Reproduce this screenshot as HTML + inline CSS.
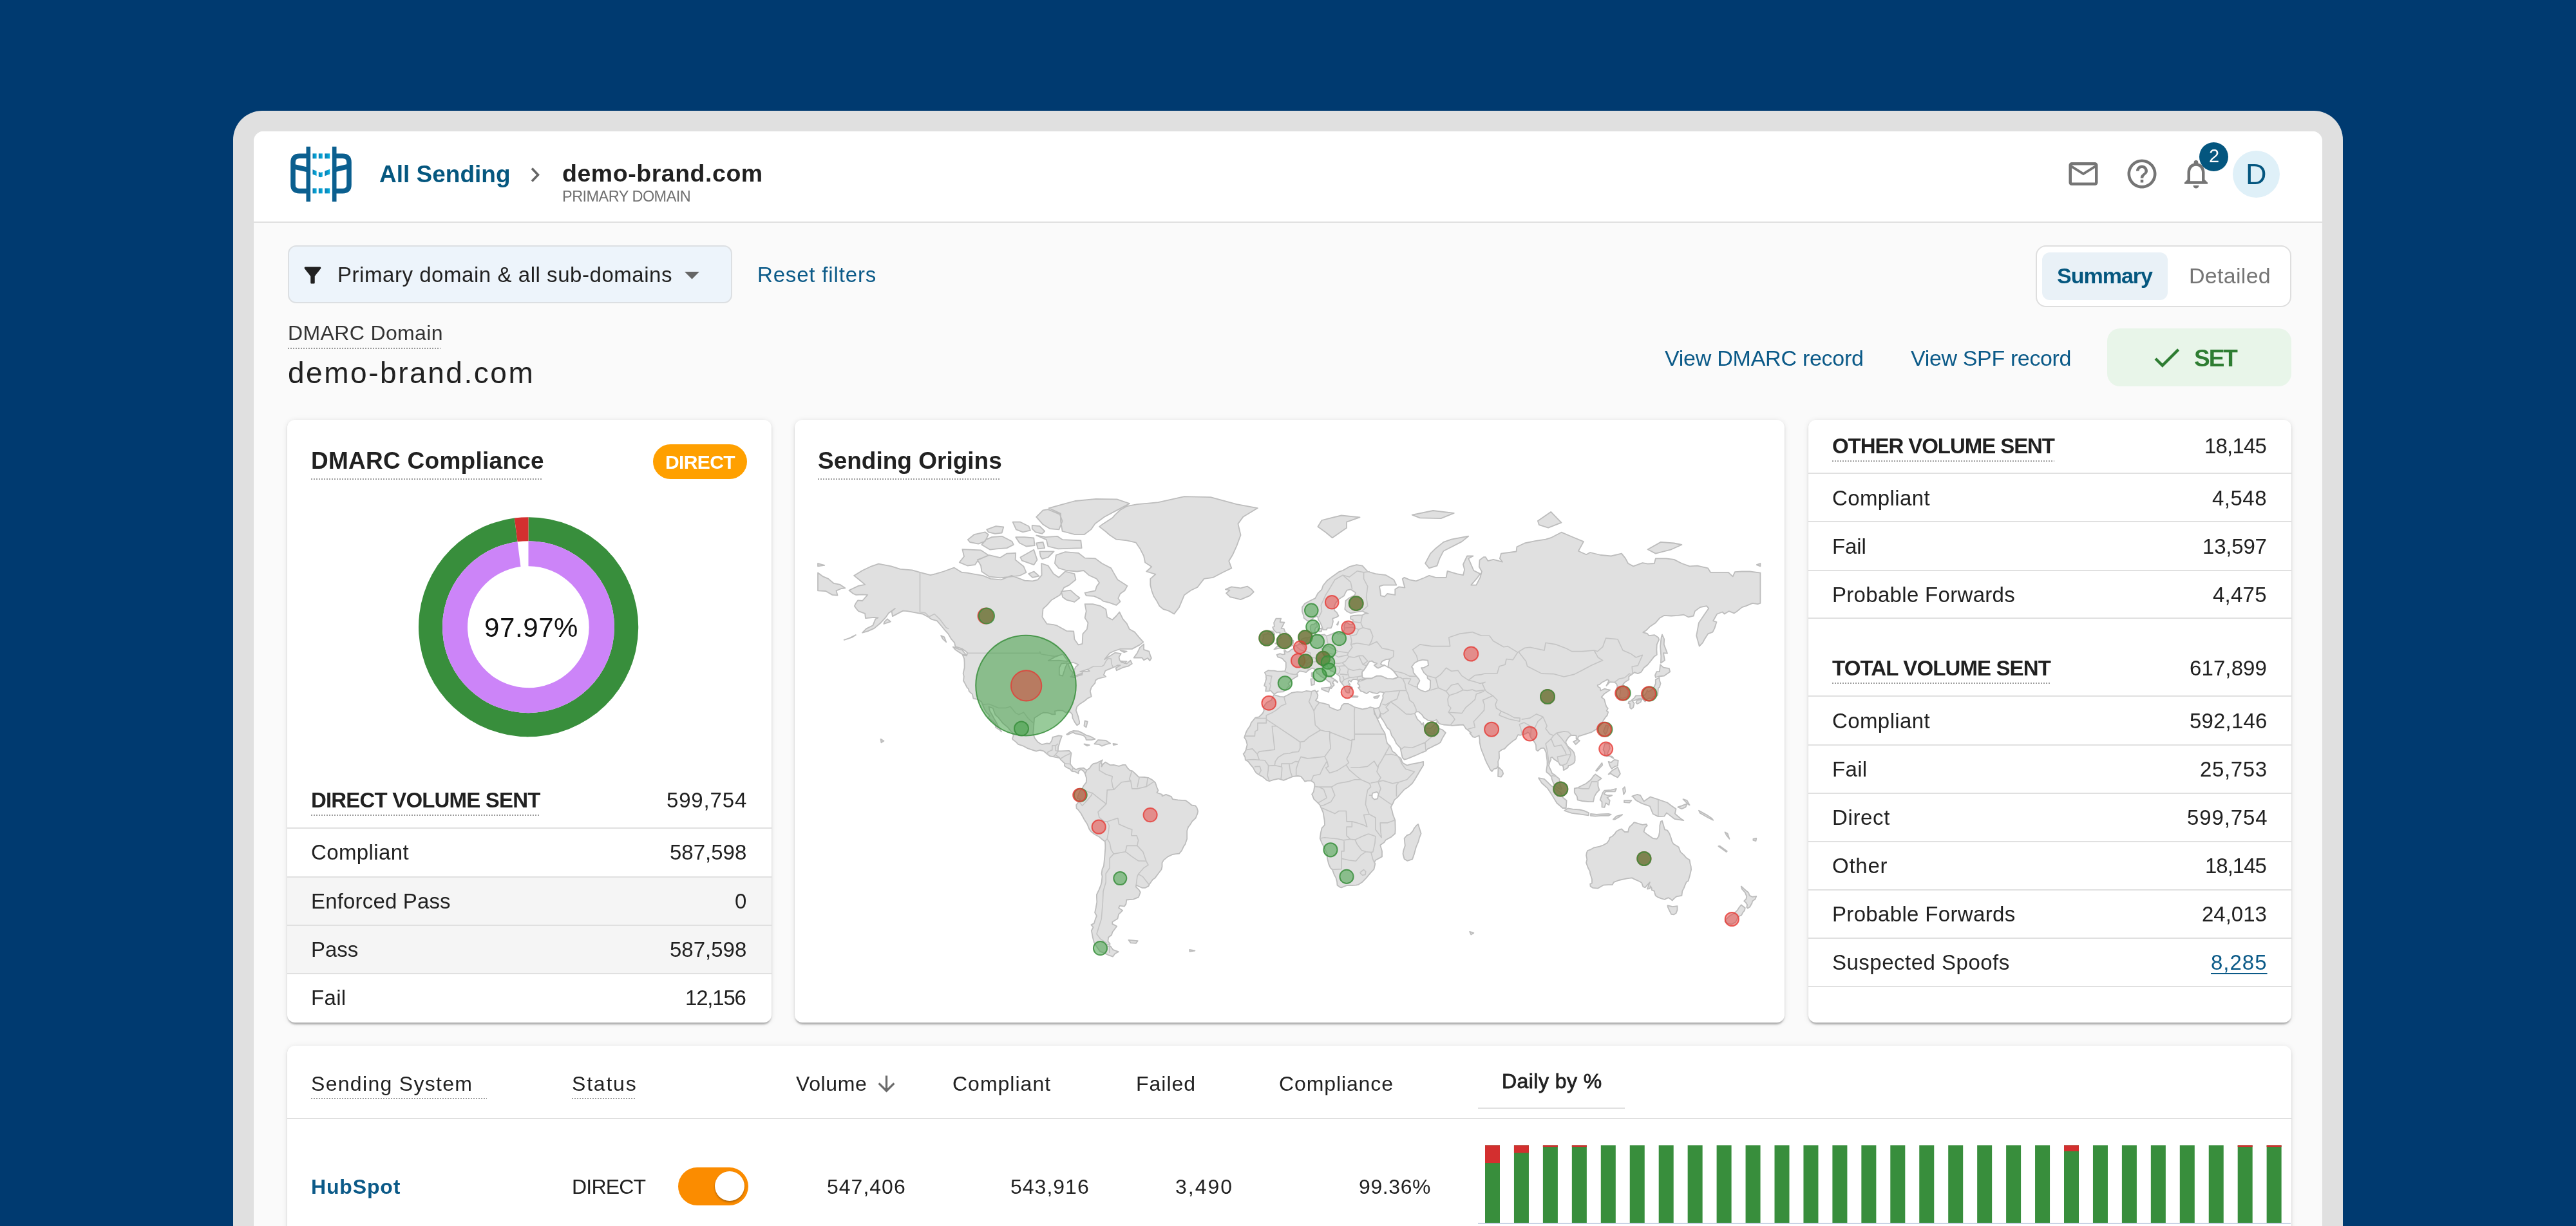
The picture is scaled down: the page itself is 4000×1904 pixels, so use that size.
<!DOCTYPE html>
<html><head><meta charset="utf-8"><style>
html,body{margin:0;padding:0;}
body{width:4000px;height:1904px;overflow:hidden;position:relative;background:#003a70;font-family:"Liberation Sans", sans-serif;}
.t{position:absolute;white-space:nowrap;will-change:transform;}
</style></head><body>
<div style="position:absolute;left:362px;top:172px;width:3276px;height:1900px;background:#e0e0e0;border-radius:45px;"></div>
<div style="position:absolute;left:394px;top:204px;width:3212px;height:1800px;background:#fafafa;border-radius:15px;overflow:hidden;"></div>
<div style="position:absolute;left:394px;top:204px;width:3212px;height:140px;background:#fff;border-radius:15px 15px 0 0;"></div>
<div style="position:absolute;left:394px;top:344px;width:3212px;height:2px;background:#e0e0e0;"></div>
<svg style="position:absolute;left:440px;top:220px" width="120" height="100" viewBox="0 0 120 100">
<defs><linearGradient id="lg" x1="0" x2="1"><stop offset="0" stop-color="#0a78b0"/><stop offset="1" stop-color="#06b4e2"/></linearGradient></defs>
<g fill="#0b5f8f">
<rect x="35.5" y="7.7" width="6.6" height="85.5"/>
<rect x="75.9" y="7.7" width="6.6" height="85.5"/>
</g>
<g fill="none" stroke="#0b5f8f" stroke-width="7.6">
<path d="M38.8 22.2 H25 Q15 22.2 15 32 V67 Q15 76.6 25 76.6 H38.8"/>
<path d="M79.2 22.2 H92 Q102 22.2 102 32 V67 Q102 76.6 92 76.6 H79.2"/>
<path d="M15 38.5 L38.8 43.8"/>
<path d="M102 38.2 L79.2 43.5"/>
</g>
<g fill="url(#lg)">
<rect x="45.5" y="18.4" width="6.1" height="7.9"/><rect x="54.8" y="18.4" width="6" height="7.9"/><rect x="64.4" y="18.4" width="7.8" height="7.9"/>
<rect x="45.5" y="72.4" width="6.1" height="8"/><rect x="54.8" y="72.4" width="6" height="8"/><rect x="64.4" y="72.4" width="7.8" height="8"/>
<path d="M45.5 43.3 L51.6 45.6 V53 L45.5 50.8Z"/>
<path d="M54.8 47 L58 48 L60.8 47 V54.5 L58 55.2 L54.8 54.5Z"/>
<path d="M64.4 45.6 L72.2 42.8 V50.6 L64.4 53.3Z"/>
</g></svg>
<div class="t" id="allsending" style="top:251.7px;font-size:37px;line-height:37px;font-weight:700;color:#05577f;letter-spacing:0.000px;left:589px;">All Sending</div>
<svg style="position:absolute;left:818px;top:258px" width="28" height="28" viewBox="0 0 28 28"><path d="M8 3.5 L17.5 13.5 L8 23.5" fill="none" stroke="#666" stroke-width="3.6"/></svg>
<div class="t" id="brand1" style="top:251.2px;font-size:37.5px;line-height:37.5px;font-weight:700;color:#212121;letter-spacing:0.539px;left:873px;">demo-brand.com</div>
<div class="t" id="primdom" style="top:293.8px;font-size:23.5px;line-height:23.5px;font-weight:400;color:#707070;letter-spacing:-0.538px;left:873px;">PRIMARY DOMAIN</div>
<svg style="position:absolute;left:3207.5px;top:243px" width="54" height="54" viewBox="0 0 24 24"><path fill="#757575" d="M22 6c0-1.1-.9-2-2-2H4c-1.1 0-2 .9-2 2v12c0 1.1.9 2 2 2h16c1.1 0 2-.9 2-2V6zm-2 0l-8 5-8-5h16zm0 12H4V8l8 5 8-5v10z"/></svg>
<svg style="position:absolute;left:3299px;top:243px" width="54" height="54" viewBox="0 0 24 24"><path fill="#757575" d="M11 18h2v-2h-2v2zm1-16C6.48 2 2 6.48 2 12s4.48 10 10 10 10-4.48 10-10S17.52 2 12 2zm0 18c-4.41 0-8-3.590-8-8s3.59-8 8-8 8 3.59 8 8-3.59 8-8 8zm0-14c-2.21 0-4 1.79-4 4h2c0-1.1.9-2 2-2s2 .9 2 2c0 2-3 1.75-3 5h2c0-2.25 3-2.5 3-5 0-2.21-1.79-4-4-4z"/></svg>
<svg style="position:absolute;left:3383px;top:243.4px" width="54" height="54" viewBox="0 0 24 24"><path fill="#757575" d="M12 22c1.1 0 2-.9 2-2h-4c0 1.1.89 2 2 2zm6-6v-5c0-3.07-1.64-5.64-4.5-6.32V4c0-.83-.67-1.5-1.5-1.5s-1.5.67-1.5 1.5v.68C7.63 5.36 6 7.92 6 11v5l-2 2v1h16v-1l-2-2zm-2 1H8v-6c0-2.48 1.51-4.5 4-4.5s4 2.02 4 4.5v6z"/></svg>
<div style="position:absolute;left:3415px;top:220.5px;width:45px;height:45px;background:#04567f;border-radius:50%;"></div>
<div class="t" id="badge2" style="top:228.1px;font-size:29px;line-height:29px;font-weight:400;color:#fff;letter-spacing:0.000px;left:3430px;">2</div>
<div style="position:absolute;left:3467px;top:234px;width:73px;height:73px;background:#dff0f8;border-radius:50%;"></div>
<div class="t" id="avD" style="top:247.9px;font-size:45px;line-height:45px;font-weight:400;color:#04567f;letter-spacing:0.000px;left:3487.2px;">D</div>
<div style="position:absolute;left:447px;top:381px;width:690px;height:90px;background:#edf4fb;border:2px solid #dcdfe2;border-radius:13px;box-sizing:border-box;"></div>
<svg style="position:absolute;left:465.5px;top:407.5px" width="39" height="39" viewBox="0 0 24 24"><path fill="#212121" d="M4.25 5.61C6.27 8.2 10 13 10 13v6c0 .55.45 1 1 1h2c.55 0 1-.45 1-1v-6s3.72-4.8 5.74-7.39c.51-.66.04-1.61-.79-1.61H5.04c-.83 0-1.3.95-.79 1.61z"/></svg>
<div class="t" id="filtertxt" style="top:409.7px;font-size:33px;line-height:33px;font-weight:400;color:#212121;letter-spacing:0.548px;left:524px;">Primary domain &amp; all sub-domains</div>
<svg style="position:absolute;left:1047px;top:398.6px" width="55" height="55" viewBox="0 0 24 24"><path fill="#666" d="M7 10l5 5 5-5z"/></svg>
<div class="t" id="reset" style="top:409.7px;font-size:33px;line-height:33px;font-weight:400;color:#0b5a88;letter-spacing:0.833px;left:1175.5px;">Reset filters</div>
<div class="t" id="dmarcdom" style="top:501.3px;font-size:32px;line-height:32px;font-weight:400;color:#333;letter-spacing:0.364px;left:447px;">DMARC Domain</div>
<div style="position:absolute;left:447px;top:540px;width:237px;height:2px;background-image:linear-gradient(90deg,#999 50%,transparent 50%);background-size:4px 2px;"></div>
<div class="t" id="brand2" style="top:556.1px;font-size:46px;line-height:46px;font-weight:400;color:#212121;letter-spacing:2.539px;left:447px;">demo-brand.com</div>
<div style="position:absolute;left:3161px;top:381px;width:397px;height:96px;background:#fff;border:2px solid #dedede;border-radius:16px;box-sizing:border-box;"></div>
<div style="position:absolute;left:3171px;top:392px;width:195px;height:74px;background:#e9f1f7;border-radius:12px;"></div>
<div class="t" id="summary" style="top:411.4px;font-size:34px;line-height:34px;font-weight:700;color:#05577f;letter-spacing:-1.000px;left:3194px;">Summary</div>
<div class="t" id="detailed" style="top:411.4px;font-size:34px;line-height:34px;font-weight:400;color:#757575;letter-spacing:0.286px;left:3399px;">Detailed</div>
<div class="t" id="viewdmarc" style="top:538.8px;font-size:34px;line-height:34px;font-weight:400;color:#0b5a88;letter-spacing:-0.250px;left:2585px;">View DMARC record</div>
<div class="t" id="viewspf" style="top:538.8px;font-size:34px;line-height:34px;font-weight:400;color:#0b5a88;letter-spacing:-0.357px;left:2967px;">View SPF record</div>
<div style="position:absolute;left:3272px;top:510px;width:286px;height:90px;background:#e8f5e9;border-radius:20px;"></div>
<svg style="position:absolute;left:3337.5px;top:528.7px" width="52.8" height="52.8" viewBox="0 0 24 24"><path fill="#2e7d32" d="M9 16.17L4.83 12l-1.42 1.41L9 19 21 7l-1.41-1.41z"/></svg>
<div class="t" id="set" style="top:537.5px;font-size:37px;line-height:37px;font-weight:700;color:#2e7d32;letter-spacing:-2.000px;left:3407px;">SET</div>
<div style="position:absolute;left:446px;top:652px;width:752px;height:936px;background:#fff;border-radius:12px;box-shadow:0 5px 3px -2px rgba(0,0,0,0.20),0 2px 3px 0 rgba(0,0,0,0.12),0 1px 8px 0 rgba(0,0,0,0.10);"></div>
<div style="position:absolute;left:1234px;top:652px;width:1537px;height:936px;background:#fff;border-radius:12px;box-shadow:0 5px 3px -2px rgba(0,0,0,0.20),0 2px 3px 0 rgba(0,0,0,0.12),0 1px 8px 0 rgba(0,0,0,0.10);"></div>
<div style="position:absolute;left:2808px;top:652px;width:750px;height:936px;background:#fff;border-radius:12px;box-shadow:0 5px 3px -2px rgba(0,0,0,0.20),0 2px 3px 0 rgba(0,0,0,0.12),0 1px 8px 0 rgba(0,0,0,0.10);"></div>
<div style="position:absolute;left:446px;top:1624px;width:3112px;height:400px;background:#fff;border-radius:12px;box-shadow:0 5px 3px -2px rgba(0,0,0,0.20),0 2px 3px 0 rgba(0,0,0,0.12),0 1px 8px 0 rgba(0,0,0,0.10);"></div>
<div class="t" id="dmarccomp" style="top:696.7px;font-size:37px;line-height:37px;font-weight:700;color:#212121;letter-spacing:0.267px;left:483px;">DMARC Compliance</div>
<div style="position:absolute;left:483px;top:742.5px;width:359px;height:2px;background-image:linear-gradient(90deg,#9e9e9e 50%,transparent 50%);background-size:4px 2px;"></div>
<div style="position:absolute;left:1014px;top:690px;width:146px;height:54px;background:#ffa000;border-radius:27px;"></div>
<div class="t" id="directbadge" style="top:703.1px;font-size:30px;line-height:30px;font-weight:700;color:#fff;letter-spacing:-0.600px;left:1033px;">DIRECT</div>
<svg style="position:absolute;left:0;top:0" width="4000" height="1904"><path fill="#388e3c" d="M820.50 803.20 A170.5 170.5 0 1 1 817.52 1144.17 L818.17 1107.18 A133.5 133.5 0 1 0 820.50 840.20Z"/><path fill="#388e3c" d="M820.50 1144.20 A170.5 170.5 0 0 1 798.85 804.58 L803.54 841.28 A133.5 133.5 0 0 0 820.50 1107.20Z"/><path fill="#d32f2f" d="M798.85 804.58 A170.5 170.5 0 0 1 820.50 803.20 L820.50 840.20 A133.5 133.5 0 0 0 803.54 841.28Z"/><path fill="#cc84f8" d="M820.50 840.20 A133.5 133.5 0 1 1 818.17 1107.18 L818.85 1068.19 A94.5 94.5 0 1 0 820.50 879.20Z"/><path fill="#cc84f8" d="M820.50 1107.20 A133.5 133.5 0 0 1 803.54 841.28 L808.50 879.97 A94.5 94.5 0 0 0 820.50 1068.20Z"/></svg>
<div class="t" id="pct" style="top:954.0px;font-size:42px;line-height:42px;font-weight:400;color:#111;letter-spacing:0.600px;left:751.5px;">97.97%</div>
<div style="position:absolute;left:483px;top:1265px;width:354px;height:2px;background-image:linear-gradient(90deg,#9e9e9e 50%,transparent 50%);background-size:4px 2px;"></div>
<div class="t" id="dvs" style="top:1226.1px;font-size:33px;line-height:33px;font-weight:700;color:#212121;letter-spacing:-0.823px;left:483px;">DIRECT VOLUME SENT</div>
<div class="t" id="dvs_v" style="top:1226.1px;font-size:33px;line-height:33px;font-weight:400;color:#212121;letter-spacing:0.833px;right:2840.2px;">599,754</div>
<div style="position:absolute;left:446px;top:1285px;width:752px;height:2px;background:#e0e0e0;"></div>
<div style="position:absolute;left:446px;top:1360.6px;width:752px;height:2px;background:#e0e0e0;"></div>
<div style="position:absolute;left:446px;top:1436px;width:752px;height:2px;background:#e0e0e0;"></div>
<div style="position:absolute;left:446px;top:1511px;width:752px;height:2px;background:#e0e0e0;"></div>
<div style="position:absolute;left:446px;top:1362.6px;width:752px;height:73.4px;background:#f5f5f5;"></div>
<div style="position:absolute;left:446px;top:1438px;width:752px;height:73px;background:#f5f5f5;"></div>
<div class="t" id="c1" style="top:1307.1px;font-size:33px;line-height:33px;font-weight:400;color:#212121;letter-spacing:0.375px;left:483px;">Compliant</div>
<div class="t" id="c1_v" style="top:1307.1px;font-size:33px;line-height:33px;font-weight:400;color:#212121;letter-spacing:-0.000px;right:2841.0px;">587,598</div>
<div class="t" id="c2" style="top:1382.6px;font-size:33px;line-height:33px;font-weight:400;color:#212121;letter-spacing:0.167px;left:483px;">Enforced Pass</div>
<div class="t" id="c2_v" style="top:1382.6px;font-size:33px;line-height:33px;font-weight:400;color:#212121;letter-spacing:1.000px;right:2840.0px;">0</div>
<div class="t" id="c3" style="top:1458.1px;font-size:33px;line-height:33px;font-weight:400;color:#212121;letter-spacing:0.000px;left:483px;">Pass</div>
<div class="t" id="c3_v" style="top:1458.1px;font-size:33px;line-height:33px;font-weight:400;color:#212121;letter-spacing:-0.000px;right:2841.0px;">587,598</div>
<div class="t" id="c4" style="top:1533.1px;font-size:33px;line-height:33px;font-weight:400;color:#212121;letter-spacing:0.334px;left:483px;">Fail</div>
<div class="t" id="c4_v" style="top:1533.1px;font-size:33px;line-height:33px;font-weight:400;color:#212121;letter-spacing:-1.200px;right:2842.2px;">12,156</div>
<div class="t" id="sorig" style="top:696.7px;font-size:37px;line-height:37px;font-weight:700;color:#212121;letter-spacing:0.000px;left:1270px;">Sending Origins</div>
<div style="position:absolute;left:1270px;top:742.5px;width:284px;height:2px;background-image:linear-gradient(90deg,#9e9e9e 50%,transparent 50%);background-size:4px 2px;"></div>
<svg style="position:absolute;left:0;top:0" width="4000" height="1904"><clipPath id="mc"><rect x="1266" y="740" width="1472" height="790"/></clipPath><g clip-path="url(#mc)"><path d="M1318.4 916.7L1333.0 909.9L1343.2 907.9L1335.9 901.7L1326.1 893.9L1339.1 886.0L1351.3 880.2L1364.3 875.7L1383.8 879.4L1398.0 883.8L1416.3 885.3L1428.5 888.9L1444.8 893.2L1452.9 891.1L1465.1 887.5L1481.4 881.6L1493.6 888.9L1501.7 889.6L1513.9 891.8L1526.1 893.9L1538.3 898.9L1554.5 900.3L1570.8 893.9L1591.1 901.7L1603.3 902.4L1611.5 900.3L1617.6 893.2L1617.2 875.0L1627.7 878.7L1635.8 891.1L1644.0 896.8L1654.1 887.5L1668.4 891.1L1670.4 900.3L1660.2 908.6L1652.1 912.6L1646.0 923.9L1633.0 931.7L1625.7 939.9L1619.6 945.5L1618.4 958.3L1625.7 968.9L1635.8 970.1L1640.7 971.3L1656.2 979.9L1667.2 980.4L1668.4 992.7L1674.5 1001.4L1680.6 999.8L1681.4 984.4L1687.9 977.0L1689.5 967.2L1684.6 959.5L1686.7 949.2L1684.6 938.1L1696.8 938.1L1709.0 941.2L1717.2 946.2L1719.2 958.3L1727.3 962.5L1733.4 956.5L1738.3 950.5L1743.6 961.3L1749.7 968.4L1753.7 977.0L1761.9 981.6L1768.8 989.9L1775.3 997.1L1770.0 1001.4L1757.8 1007.9L1739.5 1007.9L1730.2 1011.0L1723.2 1014.2L1715.1 1024.1L1719.2 1021.5L1731.4 1013.7L1740.7 1015.2L1737.5 1020.4L1738.7 1025.6L1741.5 1028.7L1749.7 1030.7L1755.4 1025.6L1757.8 1030.7L1751.7 1034.7L1743.6 1036.7L1733.8 1041.2L1732.6 1037.2L1739.5 1033.2L1735.4 1033.2L1728.5 1036.7L1721.2 1039.7L1716.3 1041.7L1713.9 1048.1L1717.2 1051.0L1711.1 1052.5L1705.0 1053.9L1700.9 1056.8L1700.5 1060.7L1697.2 1064.5L1694.8 1067.3L1692.8 1073.4L1694.8 1081.8L1688.7 1084.6L1684.6 1088.2L1676.9 1093.2L1672.4 1097.3L1670.8 1103.1L1674.1 1112.4L1676.1 1120.7L1676.1 1123.8L1672.4 1126.4L1669.2 1122.1L1665.5 1115.1L1665.1 1109.8L1662.3 1106.2L1658.2 1105.3L1655.0 1106.7L1650.1 1103.6L1644.0 1103.1L1637.9 1104.4L1638.7 1109.3L1633.8 1109.3L1627.7 1107.1L1620.4 1106.7L1616.3 1108.4L1609.4 1112.9L1606.2 1115.1L1605.4 1123.4L1605.0 1131.6L1604.1 1138.9L1606.6 1146.1L1611.1 1152.0L1614.7 1154.5L1618.0 1156.2L1625.7 1154.5L1629.8 1155.0L1633.0 1150.7L1634.6 1144.8L1644.0 1142.3L1648.9 1143.1L1646.0 1150.7L1644.8 1155.8L1643.2 1160.0L1642.8 1166.3L1648.0 1166.3L1660.2 1165.8L1663.5 1169.6L1662.3 1177.9L1661.9 1186.5L1666.3 1192.3L1670.4 1195.1L1676.5 1193.1L1682.6 1192.7L1687.5 1196.0L1685.0 1201.7L1682.6 1197.6L1678.5 1194.7L1674.9 1197.6L1674.5 1201.3L1669.6 1198.4L1664.7 1198.0L1661.5 1194.3L1656.2 1191.9L1652.9 1189.4L1653.3 1185.7L1647.2 1179.9L1645.2 1177.0L1638.7 1175.8L1630.2 1174.1L1626.9 1171.7L1620.4 1166.3L1614.7 1165.0L1609.0 1166.7L1601.3 1164.2L1595.6 1162.1L1588.3 1158.3L1581.0 1155.8L1577.7 1152.4L1572.8 1148.6L1572.0 1146.9L1573.7 1142.3L1572.0 1138.0L1569.2 1135.0L1564.7 1129.4L1560.6 1126.0L1557.0 1122.9L1552.5 1117.2L1550.5 1114.6L1545.6 1110.2L1543.2 1104.0L1541.9 1100.0L1535.4 1097.7L1537.1 1104.4L1540.3 1109.8L1543.6 1115.9L1546.4 1120.7L1549.3 1126.4L1552.1 1130.7L1555.0 1136.3L1552.5 1133.7L1546.0 1129.4L1545.6 1124.2L1541.5 1119.9L1536.3 1116.4L1533.8 1115.1L1537.1 1111.5L1531.4 1105.8L1528.9 1101.8L1525.7 1094.1L1524.1 1090.0L1520.4 1087.3L1515.9 1085.5L1511.5 1085.0L1509.8 1078.1L1505.0 1073.9L1503.7 1069.7L1501.7 1067.8L1498.5 1061.6L1496.0 1057.3L1496.8 1050.5L1495.6 1045.7L1497.6 1037.2L1497.6 1028.7L1497.2 1023.0L1494.8 1017.3L1500.9 1018.4L1502.5 1014.2L1499.7 1011.6L1493.6 1007.3L1483.4 1004.1L1482.2 998.2L1477.3 992.7L1472.4 984.4L1467.2 978.7L1461.1 971.3L1455.0 964.2L1446.8 961.9L1441.5 958.3L1432.6 953.5L1422.4 951.7L1409.0 949.2L1402.1 948.6L1394.0 952.9L1385.9 957.1L1384.6 949.2L1389.9 944.9L1379.8 952.3L1375.7 958.3L1367.6 967.2L1357.4 975.9L1347.2 980.4L1339.1 982.7L1345.2 976.4L1355.4 971.3L1359.4 961.3L1363.5 959.5L1357.4 958.9L1344.0 960.1L1343.2 952.9L1333.0 949.2L1329.8 945.5L1326.9 941.2L1328.9 936.8L1332.2 932.3L1339.1 933.0L1347.2 923.9L1339.1 923.3L1329.3 923.9L1324.9 922.0L1318.4 916.7ZM1687.5 1196.0L1691.9 1193.1L1694.8 1188.6L1697.6 1186.1L1702.9 1184.9L1708.2 1182.4L1711.9 1180.3L1709.4 1184.1L1711.1 1186.5L1710.6 1190.6L1713.1 1186.5L1716.3 1183.6L1718.0 1184.5L1724.1 1188.2L1729.3 1187.8L1737.5 1189.8L1743.6 1187.8L1747.6 1187.8L1750.5 1192.3L1754.5 1196.4L1758.6 1197.6L1763.9 1202.5L1768.0 1206.6L1777.3 1207.0L1783.0 1207.8L1789.1 1211.1L1794.0 1215.5L1796.4 1222.9L1798.5 1227.7L1796.4 1231.0L1804.5 1233.8L1804.5 1236.3L1810.6 1233.8L1818.8 1237.1L1820.8 1241.2L1828.9 1242.4L1835.0 1242.8L1841.1 1243.2L1845.2 1246.0L1850.5 1250.5L1856.2 1251.3L1858.6 1254.6L1860.2 1259.9L1859.4 1263.6L1856.6 1270.5L1851.3 1275.5L1847.2 1282.1L1845.2 1284.1L1843.2 1290.3L1843.2 1302.8L1840.3 1311.3L1837.9 1314.6L1835.0 1321.0L1831.0 1325.7L1826.1 1326.1L1820.8 1327.0L1813.5 1330.4L1807.0 1335.6L1804.5 1339.9L1804.5 1346.1L1803.3 1350.5L1797.6 1358.0L1793.6 1363.4L1789.9 1366.1L1785.4 1372.4L1783.4 1376.1L1778.5 1378.8L1773.2 1378.8L1768.0 1376.5L1764.3 1374.2L1763.9 1377.4L1768.8 1382.1L1770.8 1385.8L1768.0 1393.3L1759.8 1396.6L1749.3 1397.5L1748.5 1403.7L1746.0 1407.6L1738.7 1406.6L1737.1 1410.0L1743.2 1413.9L1740.3 1416.8L1737.1 1419.8L1735.4 1426.8L1727.3 1431.8L1727.3 1434.9L1734.2 1438.5L1727.3 1447.8L1726.1 1452.0L1721.2 1455.7L1720.4 1461.7L1723.7 1466.0L1717.2 1467.6L1719.2 1469.3L1724.1 1469.3L1728.1 1474.8L1736.7 1478.2L1731.4 1481.0L1728.1 1485.6L1721.2 1483.3L1715.1 1480.4L1708.2 1477.6L1702.9 1470.4L1698.9 1463.8L1696.8 1455.7L1694.8 1445.2L1697.6 1440.0L1694.4 1436.4L1698.9 1433.9L1700.9 1427.3L1702.9 1422.3L1700.1 1417.3L1701.7 1410.0L1702.5 1405.2L1703.3 1400.8L1702.9 1393.3L1702.9 1389.5L1706.6 1381.6L1709.4 1374.7L1710.6 1370.1L1711.5 1361.1L1710.6 1356.7L1711.5 1350.0L1713.9 1344.8L1714.7 1336.9L1715.5 1328.3L1716.3 1317.6L1716.3 1311.7L1715.9 1307.0L1711.1 1303.3L1706.6 1299.5L1699.7 1295.7L1694.0 1291.2L1691.5 1287.9L1688.3 1280.0L1683.8 1273.0L1678.5 1263.2L1674.1 1257.5L1671.6 1255.4L1671.2 1250.1L1675.3 1244.8L1677.3 1241.2L1672.8 1239.9L1674.5 1234.3L1676.5 1229.0L1681.0 1223.7L1682.6 1220.4L1686.7 1215.1L1687.1 1208.6L1685.0 1201.7L1687.5 1196.0ZM2133.0 1099.5L2127.7 1098.2L2123.2 1100.0L2115.5 1101.3L2103.3 1098.2L2099.3 1095.9L2093.2 1092.8L2087.1 1092.8L2083.4 1095.9L2081.4 1101.8L2076.9 1103.1L2070.8 1100.9L2064.7 1098.2L2063.5 1094.6L2055.4 1092.3L2048.4 1090.9L2042.8 1087.8L2045.6 1084.1L2046.4 1079.5L2044.4 1075.3L2046.8 1073.0L2043.2 1074.4L2041.9 1072.0L2036.3 1073.9L2028.1 1073.0L2022.0 1074.8L2014.3 1074.4L2005.8 1075.8L1999.3 1079.5L1993.6 1082.3L1987.5 1081.8L1981.4 1079.9L1978.1 1079.0L1976.1 1082.7L1974.1 1087.3L1970.8 1089.1L1967.1 1090.9L1963.9 1095.0L1961.9 1098.6L1962.7 1103.6L1960.6 1108.0L1955.0 1113.3L1949.3 1114.6L1942.8 1122.5L1941.1 1127.3L1937.1 1132.9L1934.6 1138.0L1932.2 1145.2L1935.0 1149.9L1936.7 1156.6L1934.6 1164.6L1932.6 1168.8L1930.6 1170.8L1933.4 1176.2L1933.8 1180.3L1938.3 1182.8L1940.7 1186.1L1946.0 1192.3L1948.0 1196.4L1950.9 1200.5L1955.0 1203.3L1961.1 1206.6L1967.1 1211.9L1971.2 1213.1L1977.3 1211.1L1985.4 1209.4L1993.2 1211.9L2000.9 1208.6L2007.8 1205.8L2015.5 1205.0L2020.0 1205.8L2024.1 1210.7L2026.1 1213.5L2030.2 1212.7L2036.3 1212.7L2040.3 1215.5L2041.5 1219.2L2039.9 1229.4L2037.1 1233.4L2040.3 1241.2L2046.4 1246.9L2049.7 1250.5L2051.7 1255.4L2054.5 1261.5L2055.4 1266.9L2056.6 1273.8L2057.0 1281.2L2052.5 1286.2L2050.9 1293.2L2049.7 1302.0L2052.5 1309.1L2056.6 1316.8L2060.6 1325.7L2061.0 1332.6L2063.1 1341.7L2065.9 1347.8L2068.8 1350.5L2072.0 1358.9L2074.5 1363.4L2076.1 1369.2L2076.5 1374.7L2081.0 1377.9L2083.0 1378.4L2091.1 1375.2L2099.3 1375.2L2105.8 1374.7L2109.4 1373.8L2115.1 1370.1L2121.6 1363.4L2127.7 1356.2L2133.4 1350.0L2135.4 1341.3L2134.2 1339.1L2135.8 1336.0L2146.0 1330.4L2146.0 1321.9L2145.2 1318.9L2143.2 1312.5L2149.3 1308.3L2151.7 1304.5L2160.2 1299.9L2166.3 1294.5L2166.7 1288.3L2166.3 1273.8L2163.1 1265.6L2161.5 1258.7L2159.8 1253.4L2163.1 1247.3L2165.1 1242.4L2170.4 1237.9L2174.5 1233.0L2180.6 1226.1L2185.8 1222.9L2192.8 1216.8L2196.8 1210.7L2201.7 1202.5L2207.0 1193.5L2210.2 1188.6L2210.2 1182.8L2204.9 1184.1L2198.9 1185.3L2190.7 1186.9L2184.6 1188.6L2178.5 1184.9L2177.3 1183.6L2175.3 1177.9L2170.4 1174.1L2166.3 1169.6L2162.3 1167.1L2159.0 1159.2L2154.1 1154.5L2152.9 1150.3L2151.7 1144.4L2150.1 1138.0L2146.0 1131.6L2141.9 1122.9L2139.1 1117.2L2134.2 1105.8L2133.0 1099.5ZM2202.1 1280.0L2206.6 1294.5L2204.1 1300.8L2202.5 1307.0L2198.9 1315.5L2196.0 1326.1L2193.2 1334.3L2185.4 1336.9L2180.6 1333.9L2178.5 1326.1L2179.3 1321.0L2181.8 1313.4L2180.6 1302.0L2184.6 1297.4L2189.5 1295.3L2194.0 1290.3L2196.0 1286.2L2199.7 1281.7L2202.1 1280.0ZM1978.9 1078.1L1983.8 1074.8L1992.4 1074.4L1997.6 1070.6L1999.7 1067.3L2002.5 1065.4L2000.5 1061.6L2005.4 1055.9L2010.6 1052.5L2014.7 1050.1L2015.1 1048.1L2013.9 1046.1L2018.0 1042.2L2023.7 1043.2L2028.1 1044.2L2031.4 1041.2L2036.3 1038.2L2037.9 1037.7L2041.5 1039.2L2043.6 1042.2L2044.8 1045.2L2048.4 1047.6L2051.3 1050.5L2056.6 1053.5L2059.4 1055.4L2062.7 1058.3L2065.1 1059.2L2067.1 1065.0L2065.1 1068.7L2067.1 1069.2L2069.2 1066.4L2071.6 1064.0L2070.8 1061.6L2068.8 1060.7L2071.6 1056.8L2074.9 1057.8L2076.9 1060.2L2076.9 1058.8L2072.8 1055.4L2070.4 1053.9L2066.7 1052.0L2067.6 1050.1L2062.7 1049.6L2059.4 1047.1L2056.6 1041.7L2052.9 1039.2L2051.7 1036.7L2051.7 1032.7L2055.0 1031.2L2057.8 1031.7L2057.0 1034.2L2058.2 1035.7L2060.6 1033.2L2063.5 1038.7L2066.7 1042.2L2068.4 1042.2L2072.8 1044.7L2075.3 1046.6L2078.9 1049.1L2080.6 1051.5L2080.6 1056.8L2083.0 1060.7L2083.8 1061.6L2085.8 1064.0L2087.5 1066.9L2088.3 1070.6L2089.9 1074.4L2093.2 1076.2L2095.2 1075.8L2095.6 1072.0L2094.8 1070.6L2097.2 1068.7L2098.0 1069.2L2099.3 1070.2L2099.7 1067.8L2095.2 1064.5L2094.4 1062.6L2096.4 1063.1L2093.6 1059.2L2094.8 1056.8L2098.0 1058.8L2098.4 1057.3L2101.3 1054.9L2107.0 1055.4L2108.2 1056.4L2110.6 1055.9L2113.5 1054.9L2119.2 1054.4L2120.0 1053.5L2116.3 1051.5L2115.1 1047.1L2115.1 1043.7L2118.0 1040.7L2122.4 1033.7L2126.5 1027.1L2130.6 1026.6L2133.4 1029.2L2137.9 1030.2L2133.8 1033.2L2137.9 1036.7L2139.9 1037.7L2145.2 1035.2L2150.1 1033.2L2146.0 1032.7L2144.0 1031.2L2146.0 1027.1L2152.1 1024.1L2158.2 1023.5L2156.2 1028.7L2155.4 1036.2L2159.4 1038.2L2163.5 1041.7L2170.8 1051.5L2166.3 1053.9L2163.1 1054.4L2154.1 1053.9L2148.0 1051.0L2144.0 1049.6L2137.9 1049.6L2129.7 1053.5L2123.2 1053.9L2119.6 1054.9L2113.5 1057.3L2109.4 1057.8L2108.2 1061.6L2110.6 1064.0L2111.5 1066.9L2109.0 1067.8L2113.1 1073.4L2116.7 1074.4L2122.0 1077.2L2126.5 1073.9L2131.8 1075.8L2138.7 1077.2L2142.3 1074.4L2148.9 1075.3L2147.2 1080.4L2147.6 1084.1L2146.0 1087.8L2144.0 1092.8L2143.2 1095.9L2141.5 1098.6L2135.8 1100.4L2133.0 1099.5L2133.8 1105.8L2134.2 1108.4L2139.1 1115.5L2141.1 1115.1L2143.6 1108.0L2144.0 1113.7L2147.2 1118.1L2150.1 1122.9L2154.1 1130.3L2158.2 1133.7L2161.0 1142.3L2165.1 1147.8L2168.4 1155.0L2174.5 1161.7L2175.7 1167.5L2177.7 1176.6L2180.6 1179.5L2184.6 1178.7L2190.7 1176.2L2196.8 1173.7L2201.3 1171.7L2207.8 1168.8L2213.9 1166.3L2217.1 1162.9L2221.2 1161.2L2227.3 1157.9L2231.4 1156.2L2236.7 1152.9L2239.5 1146.9L2244.8 1138.0L2239.9 1133.3L2233.4 1131.1L2231.0 1127.7L2231.0 1121.2L2226.5 1126.0L2221.2 1131.1L2215.1 1130.7L2211.5 1130.3L2210.2 1122.1L2208.2 1125.5L2205.4 1121.2L2200.9 1117.2L2196.8 1108.0L2199.3 1105.3L2202.9 1105.3L2206.2 1108.4L2208.2 1110.2L2211.0 1114.6L2217.1 1118.6L2225.3 1120.3L2230.6 1117.7L2234.6 1123.8L2241.5 1125.5L2251.7 1126.4L2254.9 1126.8L2263.9 1126.0L2272.0 1125.5L2274.1 1128.1L2276.1 1131.6L2280.2 1134.6L2284.2 1138.0L2282.2 1138.4L2287.1 1144.4L2290.3 1145.2L2296.8 1142.3L2297.6 1148.6L2297.6 1152.9L2299.3 1161.2L2301.7 1167.9L2304.1 1173.7L2305.8 1178.3L2308.6 1184.9L2311.5 1190.2L2313.9 1195.1L2316.7 1198.0L2319.6 1194.3L2324.1 1193.1L2326.5 1189.0L2326.1 1182.8L2328.1 1177.5L2327.7 1167.5L2332.2 1164.2L2336.2 1162.9L2340.3 1158.3L2345.2 1154.1L2349.3 1150.7L2354.1 1147.4L2355.4 1144.4L2357.4 1141.0L2360.6 1141.8L2363.5 1141.0L2369.6 1139.3L2372.4 1137.2L2374.9 1138.9L2375.7 1142.7L2377.3 1145.7L2379.3 1148.2L2383.0 1152.9L2385.0 1157.1L2385.4 1164.6L2387.9 1166.3L2392.8 1162.1L2396.8 1161.7L2398.4 1163.3L2400.9 1169.2L2401.7 1175.8L2402.5 1182.0L2402.5 1188.2L2401.3 1195.6L2401.3 1198.8L2404.9 1201.7L2409.4 1206.6L2409.4 1209.0L2411.5 1214.7L2413.5 1219.6L2418.4 1223.3L2422.4 1225.7L2423.6 1225.7L2425.3 1225.3L2422.4 1219.6L2422.0 1214.7L2421.2 1209.4L2417.1 1206.2L2413.5 1202.9L2410.2 1201.3L2408.2 1196.4L2406.2 1192.3L2404.9 1189.0L2406.6 1183.2L2408.2 1179.9L2408.2 1176.6L2410.2 1175.8L2413.1 1179.1L2416.3 1181.2L2420.0 1183.6L2422.4 1188.2L2426.5 1188.6L2427.7 1192.3L2427.7 1196.0L2429.3 1195.6L2434.6 1192.3L2435.4 1189.0L2437.1 1189.0L2441.9 1186.5L2444.8 1184.1L2445.6 1181.2L2445.6 1174.6L2444.0 1168.8L2441.5 1165.4L2439.1 1163.3L2434.6 1159.2L2431.4 1153.7L2431.8 1150.7L2435.4 1145.2L2438.7 1142.3L2442.8 1141.8L2447.6 1142.3L2447.6 1147.4L2450.1 1146.9L2450.9 1143.5L2454.9 1142.3L2461.9 1140.1L2465.9 1138.9L2471.2 1137.2L2476.1 1134.2L2479.3 1132.0L2481.8 1129.4L2485.4 1126.4L2487.9 1122.9L2489.5 1119.0L2492.8 1114.2L2495.6 1111.1L2497.2 1105.8L2494.8 1104.0L2496.8 1100.0L2494.4 1097.3L2493.2 1093.7L2491.1 1085.9L2486.7 1082.7L2491.1 1077.6L2495.6 1074.4L2500.1 1071.6L2495.2 1070.6L2491.9 1069.7L2485.4 1072.5L2484.6 1068.3L2481.4 1066.4L2480.6 1064.0L2483.8 1063.1L2487.5 1059.7L2491.5 1057.8L2495.6 1055.4L2498.4 1056.8L2494.4 1065.0L2497.6 1061.6L2499.7 1059.2L2507.0 1059.7L2509.8 1061.6L2511.5 1065.4L2510.6 1069.7L2514.7 1070.2L2516.3 1071.6L2515.9 1075.8L2515.1 1080.4L2515.5 1083.6L2520.0 1084.6L2524.1 1083.2L2526.1 1082.3L2527.7 1080.4L2528.1 1075.8L2527.3 1072.5L2524.5 1067.3L2520.0 1063.1L2522.8 1059.7L2524.1 1058.8L2529.3 1055.4L2529.3 1050.5L2533.0 1048.1L2535.0 1046.6L2537.9 1044.2L2543.2 1046.1L2548.4 1043.7L2552.5 1037.2L2558.6 1032.2L2564.7 1024.6L2568.8 1019.4L2572.8 1016.8L2572.4 1008.9L2572.8 1000.9L2576.1 993.3L2574.9 989.9L2568.8 986.1L2560.6 987.2L2557.8 983.8L2551.3 982.1L2556.6 978.7L2561.5 973.6L2570.8 967.2L2576.9 960.1L2583.8 955.9L2595.2 956.5L2605.4 955.9L2614.7 954.7L2621.6 958.3L2629.7 956.5L2631.8 949.2L2639.9 943.1L2650.1 941.2L2653.3 944.9L2650.1 949.2L2646.0 955.3L2639.9 964.2L2637.9 967.2L2635.8 978.7L2634.2 987.2L2638.7 1003.6L2644.0 998.2L2646.8 992.7L2652.1 984.4L2659.4 981.6L2662.3 975.9L2665.5 966.0L2660.2 964.2L2666.3 953.5L2674.5 950.5L2677.7 953.5L2684.6 949.2L2692.8 952.3L2696.8 949.8L2704.9 943.1L2711.0 941.2L2721.2 936.8L2729.3 938.1L2733.4 936.8L2733.4 889.6L2717.1 887.5L2704.9 887.5L2694.0 888.2L2690.7 895.4L2683.8 888.9L2672.4 888.9L2656.2 888.9L2652.1 882.4L2635.8 878.7L2623.6 879.4L2611.4 875.0L2599.3 868.9L2587.1 867.4L2570.8 867.4L2568.8 875.0L2558.6 875.7L2550.5 874.2L2536.2 879.4L2528.1 875.0L2524.1 867.4L2518.0 859.6L2501.7 863.5L2485.4 862.0L2469.2 858.0L2463.1 861.2L2450.9 855.7L2459.0 841.1L2440.7 833.5L2424.5 826.7L2408.2 835.2L2400.1 837.7L2383.8 840.2L2367.6 843.5L2355.4 849.3L2354.5 856.5L2331.0 859.6L2328.9 867.4L2333.0 872.7L2318.8 868.9L2310.6 871.2L2306.6 865.1L2303.7 865.1L2297.6 869.7L2296.8 880.2L2300.9 887.5L2298.4 896.8L2292.3 908.6L2284.2 908.6L2294.4 896.8L2298.4 891.1L2288.3 886.0L2280.2 867.4L2287.5 863.5L2278.1 863.5L2272.0 876.5L2274.1 884.6L2272.0 893.2L2261.9 891.1L2247.6 886.8L2245.6 896.8L2229.3 896.8L2219.2 893.9L2211.0 897.5L2198.9 902.4L2188.7 900.3L2180.6 896.8L2177.7 898.9L2181.4 912.6L2172.4 911.3L2166.3 915.3L2166.3 923.9L2154.1 922.0L2150.1 926.5L2144.0 925.2L2143.2 917.3L2141.9 910.6L2148.0 908.6L2168.4 908.6L2164.3 900.3L2152.1 893.2L2135.8 891.1L2123.7 887.5L2115.5 878.7L2106.6 877.2L2095.2 880.2L2085.0 886.0L2078.9 888.2L2068.8 895.4L2060.6 901.7L2054.5 909.2L2052.5 915.3L2046.4 921.3L2042.3 929.1L2034.2 933.0L2026.1 937.4L2022.0 943.1L2022.0 949.8L2024.5 957.1L2024.5 959.5L2030.2 964.2L2035.0 963.7L2040.3 958.9L2044.8 957.1L2046.4 958.3L2047.2 962.5L2049.7 966.0L2052.5 972.4L2054.5 978.2L2059.8 978.2L2061.0 975.3L2066.7 975.3L2068.4 971.8L2070.0 965.4L2069.2 960.7L2075.7 958.3L2078.5 956.5L2075.7 951.1L2072.0 948.0L2071.6 942.4L2074.1 936.2L2078.9 930.4L2087.1 925.2L2089.1 920.6L2091.5 916.7L2097.2 915.3L2105.0 920.6L2103.3 924.6L2095.2 928.5L2089.5 933.0L2089.1 939.9L2088.3 946.2L2091.9 949.8L2097.2 952.3L2103.3 951.1L2109.4 949.8L2115.5 949.2L2119.6 951.1L2124.5 952.9L2119.6 952.9L2115.5 955.3L2109.4 955.3L2102.1 955.9L2097.2 957.1L2097.2 961.3L2100.9 962.5L2100.5 967.2L2099.7 970.1L2096.0 970.1L2091.1 966.6L2089.1 967.8L2087.1 971.3L2087.5 977.6L2085.4 982.1L2082.6 982.1L2077.7 984.9L2076.1 982.7L2070.8 983.2L2064.7 986.1L2059.8 987.7L2056.6 985.5L2050.5 986.1L2046.4 987.2L2043.2 985.5L2042.3 982.1L2041.5 978.2L2043.6 974.1L2046.0 973.6L2044.0 967.2L2044.8 966.0L2040.3 969.5L2036.3 970.1L2034.6 973.0L2035.0 978.7L2036.7 982.1L2037.5 987.2L2037.1 987.7L2034.2 989.4L2030.2 990.5L2026.1 990.5L2021.2 992.7L2020.0 996.5L2018.0 998.7L2015.9 1001.4L2013.9 1002.0L2009.4 1003.6L2008.2 1007.9L2005.0 1008.9L2002.1 1011.6L1999.7 1012.6L1996.8 1012.1L1996.4 1010.5L1994.0 1010.5L1995.2 1015.8L1991.5 1016.3L1987.5 1015.2L1982.6 1016.8L1984.2 1020.4L1989.5 1022.0L1991.5 1023.0L1993.6 1025.6L1996.8 1028.7L1996.8 1032.2L1996.8 1036.7L1995.2 1042.2L1989.5 1042.7L1983.4 1042.7L1978.5 1041.7L1973.2 1041.7L1969.2 1041.2L1965.5 1043.2L1963.9 1044.7L1965.9 1048.6L1965.9 1052.0L1966.3 1053.9L1965.1 1058.3L1963.1 1065.0L1965.9 1066.4L1965.9 1069.7L1965.1 1073.4L1969.6 1073.4L1973.2 1072.5L1976.1 1075.8L1978.9 1078.1ZM1270.0 917.3L1282.2 918.0L1292.4 923.9L1300.5 924.6L1298.5 917.3L1306.6 914.0L1312.3 913.3L1304.6 907.9L1294.4 905.8L1286.3 898.9L1278.1 895.4L1270.0 889.6ZM1823.2 953.5L1831.0 943.1L1835.0 933.6L1839.1 923.9L1849.3 916.7L1859.4 912.0L1869.6 898.9L1883.8 896.8L1900.1 888.2L1912.3 882.4L1908.2 871.2L1914.3 861.2L1920.4 847.6L1926.5 831.0L1922.4 813.4L1930.6 802.4L1952.9 789.1L1920.4 783.2L1879.8 772.1L1839.1 771.1L1798.5 780.2L1765.9 783.2L1749.7 786.2L1739.5 792.0L1731.4 799.6L1727.3 804.3L1713.1 813.4L1707.0 817.9L1717.2 825.8L1723.2 831.0L1733.4 837.7L1749.7 839.4L1763.9 842.7L1770.0 851.7L1776.1 863.5L1778.1 873.5L1788.3 880.2L1780.2 887.5L1794.4 891.8L1786.3 898.9L1786.3 908.6L1788.3 917.3L1791.5 925.9L1796.4 933.6L1800.5 941.2L1806.6 946.2L1814.7 948.6L1823.2 953.5ZM1750.5 909.9L1746.4 917.3L1739.5 922.0L1736.3 929.1L1739.5 934.3L1733.4 939.9L1723.2 936.2L1713.1 933.6L1709.0 930.4L1698.9 925.9L1686.7 925.2L1684.6 920.6L1700.9 917.3L1702.9 910.6L1707.0 905.1L1702.9 898.9L1690.7 893.2L1682.6 886.0L1672.4 887.5L1656.2 886.0L1644.0 882.4L1637.9 875.0L1639.9 862.0L1654.1 857.2L1674.5 858.8L1684.6 866.6L1700.9 867.4L1711.1 875.0L1725.3 882.4L1729.3 889.6L1735.4 900.3L1746.4 907.2ZM1676.5 928.5L1670.4 923.9L1662.3 916.7L1648.0 918.7L1650.1 927.2L1656.2 931.7L1668.4 934.9ZM1613.5 894.6L1603.3 896.8L1597.2 891.1L1605.4 887.5ZM1910.2 927.2L1904.1 921.3L1909.4 916.7L1902.9 915.3L1912.3 911.3L1926.5 913.3L1936.7 910.6L1942.8 914.7L1946.8 919.3L1940.7 925.2L1926.5 931.1L1916.3 928.5ZM1978.5 1008.4L1985.4 1006.8L1995.6 1005.7L2007.4 1002.5L2008.6 994.9L2002.9 992.7L2001.7 989.4L1999.3 984.4L1995.6 981.6L1993.6 976.4L1989.5 975.9L1991.5 972.4L1994.4 966.6L1987.5 966.0L1989.1 960.7L1981.4 960.7L1978.1 967.2L1978.9 973.0L1976.1 974.1L1978.1 978.7L1982.2 982.7L1987.5 982.1L1987.5 987.2L1989.5 990.5L1982.6 993.8L1984.6 996.5L1980.2 999.3L1987.5 1001.4L1983.4 1003.6L1978.5 1008.4ZM1977.3 997.1L1976.5 991.1L1979.3 984.4L1976.5 980.4L1971.2 979.9L1967.1 984.4L1961.1 986.1L1961.9 990.5L1959.0 997.6L1963.1 1000.9L1969.2 999.3L1976.1 997.1ZM2052.1 1068.7L2065.1 1067.3L2063.1 1074.8L2052.5 1070.6ZM2035.4 1054.4L2041.5 1053.9L2040.7 1063.1L2036.3 1064.0L2035.8 1059.2ZM2036.7 1045.2L2039.9 1044.7L2040.3 1050.5L2038.7 1052.5L2036.7 1050.1ZM2097.2 1080.4L2108.6 1081.3L2107.8 1082.7L2099.3 1082.7ZM2133.0 1082.7L2141.9 1079.9L2139.1 1084.1L2134.2 1084.1ZM2046.4 977.0L2052.5 975.3L2052.1 980.4L2048.4 981.0ZM2075.7 970.1L2078.5 965.4L2077.3 970.7ZM2046.4 817.9L2052.5 808.0L2066.7 804.3L2083.0 800.5L2111.5 803.3L2091.1 810.7L2091.1 819.7L2068.8 835.2L2058.6 826.7ZM2213.1 875.0L2221.2 859.6L2229.3 851.7L2241.5 841.9L2253.7 837.7L2280.2 832.7L2270.0 841.1L2241.5 855.7L2235.4 867.4L2231.4 878.7L2219.2 882.4ZM2192.8 799.6L2225.3 793.0L2257.8 796.8L2237.5 805.2L2204.9 804.3ZM2387.9 808.9L2408.2 794.9L2424.5 811.6L2404.1 819.7L2389.9 815.2ZM2558.6 853.3L2578.9 841.9L2599.3 843.5L2611.4 846.0L2595.2 853.3L2570.8 859.6ZM2727.7 877.2L2733.4 875.0L2733.4 879.4ZM1270.0 875.0L1280.2 877.9L1270.0 879.4ZM2578.9 1029.7L2585.0 1025.6L2583.0 1014.2L2589.1 1014.7L2583.8 1000.9L2584.2 992.7L2581.0 985.5L2579.7 989.9L2578.1 1003.6L2579.3 1019.4ZM2533.8 1087.3L2537.5 1084.1L2540.3 1080.4L2546.4 1080.4L2553.3 1079.9L2555.8 1077.2L2557.8 1072.0L2559.8 1074.4L2564.7 1071.1L2568.8 1066.4L2570.8 1061.6L2570.8 1055.4L2576.5 1052.5L2576.9 1056.8L2578.5 1061.2L2576.9 1067.3L2574.9 1068.7L2574.5 1073.9L2574.1 1079.5L2570.8 1082.3L2570.0 1081.3L2567.5 1081.8L2565.9 1084.6L2560.6 1084.1L2557.8 1085.9L2554.5 1089.6L2550.9 1085.9L2546.4 1084.6L2542.3 1085.9L2538.3 1087.8ZM2570.8 1052.0L2575.7 1050.5L2584.2 1049.6L2593.2 1043.2L2591.9 1038.2L2583.0 1036.7L2578.1 1032.2L2576.9 1043.2L2572.4 1043.2L2570.0 1048.6ZM2529.3 1089.6L2534.2 1087.8L2537.5 1092.3L2536.2 1098.6L2533.0 1100.9L2531.0 1099.1L2531.0 1092.8L2528.5 1092.3ZM2540.3 1091.4L2542.3 1087.3L2549.3 1086.4L2547.6 1090.5L2542.3 1093.2ZM2489.9 1135.9L2493.6 1126.4L2497.6 1127.3L2495.6 1135.9L2492.8 1140.6ZM2443.2 1152.0L2449.7 1148.2L2452.9 1150.3L2446.8 1156.2ZM2326.1 1205.8L2326.5 1191.0L2333.0 1197.2L2334.2 1201.7L2331.0 1206.6ZM2489.5 1164.2L2491.9 1155.0L2498.4 1155.0L2499.7 1162.1L2496.0 1170.4L2498.4 1173.7L2505.8 1177.9L2502.9 1174.6L2499.7 1174.1L2494.4 1174.6L2491.9 1172.9L2491.5 1167.5ZM2497.6 1202.5L2503.7 1196.4L2511.9 1191.5L2515.9 1201.7L2511.9 1207.4L2505.8 1204.5L2500.9 1201.3ZM2506.6 1179.9L2512.7 1180.8L2511.9 1189.4L2507.8 1190.2L2502.5 1193.9L2499.7 1189.0L2497.6 1182.8L2501.7 1184.1ZM2478.1 1196.8L2487.5 1184.9L2488.3 1188.2L2479.3 1197.6ZM2444.8 1224.5L2448.9 1223.7L2454.9 1220.8L2463.1 1216.8L2470.4 1210.7L2474.5 1205.0L2477.3 1202.5L2486.7 1209.0L2481.4 1212.7L2481.4 1220.8L2483.4 1226.9L2479.3 1231.0L2475.7 1237.1L2474.1 1245.2L2467.1 1245.2L2457.0 1244.0L2449.7 1242.4L2448.9 1237.1L2444.8 1231.0ZM2389.1 1208.2L2398.0 1209.8L2409.4 1220.8L2414.3 1223.7L2423.6 1231.0L2426.5 1238.3L2432.6 1243.2L2431.8 1255.0L2426.5 1255.0L2417.5 1247.3L2410.2 1235.1L2402.9 1224.1L2394.0 1216.0ZM2429.3 1258.7L2434.6 1255.4L2441.9 1256.6L2452.9 1257.5L2459.8 1259.1L2467.1 1262.4L2466.7 1266.4L2452.9 1264.4L2440.7 1262.8L2430.6 1259.5ZM2470.0 1264.0L2479.3 1264.8L2485.4 1264.4L2497.6 1264.0L2501.7 1264.8L2497.6 1266.9L2485.4 1266.9L2477.3 1267.7L2470.0 1266.9ZM2504.9 1272.6L2509.8 1267.7L2519.2 1265.2L2513.9 1268.9L2507.8 1272.6ZM2487.5 1253.4L2487.5 1245.2L2484.6 1242.4L2488.7 1231.0L2491.5 1227.7L2501.7 1226.9L2509.8 1224.9L2507.8 1229.4L2493.6 1229.0L2490.7 1233.0L2495.6 1235.1L2503.3 1235.1L2495.6 1238.7L2499.7 1243.2L2498.4 1250.1L2493.6 1247.3L2491.5 1253.8ZM2520.0 1224.9L2522.8 1222.1L2524.1 1229.0L2521.2 1233.8ZM2522.0 1243.2L2533.4 1243.2L2530.2 1246.5L2522.0 1246.0ZM2534.2 1236.7L2542.3 1233.8L2547.2 1235.1L2552.5 1244.4L2562.7 1237.5L2574.9 1241.6L2589.1 1246.5L2595.2 1251.3L2602.5 1256.2L2600.9 1263.6L2609.4 1271.0L2614.3 1274.2L2600.1 1271.8L2587.9 1262.4L2584.2 1267.7L2574.9 1268.1L2566.7 1264.0L2561.9 1252.2L2548.4 1247.3L2540.3 1242.8L2535.4 1237.1ZM2605.4 1253.4L2611.4 1251.3L2619.6 1248.1L2617.5 1253.4L2611.4 1256.2ZM2613.5 1241.2L2619.6 1243.2L2623.6 1250.1L2621.6 1249.3ZM2637.9 1258.7L2650.1 1265.6L2658.2 1271.0L2660.2 1273.8L2652.1 1269.7L2639.9 1262.8ZM2678.5 1292.4L2682.6 1294.5L2685.4 1302.8L2680.6 1296.6ZM2668.4 1314.2L2680.6 1323.1L2681.8 1321.9L2670.4 1313.8ZM2722.4 1302.8L2727.3 1302.0L2726.5 1306.2L2722.4 1304.9ZM2581.0 1274.7L2585.0 1288.3L2589.1 1289.5L2592.3 1294.5L2594.4 1300.3L2596.4 1307.0L2598.4 1310.4L2606.6 1315.5L2609.4 1323.1L2614.7 1327.8L2618.8 1332.6L2623.6 1335.6L2624.5 1341.3L2625.7 1345.6L2626.1 1350.5L2623.6 1361.1L2621.6 1367.9L2618.8 1369.7L2616.7 1374.2L2614.7 1379.3L2612.3 1383.9L2611.4 1390.9L2603.3 1392.3L2599.3 1395.6L2596.8 1398.5L2593.2 1395.6L2590.7 1394.2L2587.1 1395.6L2585.0 1397.0L2578.9 1395.1L2574.9 1393.7L2570.8 1390.9L2569.6 1387.6L2568.8 1383.9L2564.7 1382.1L2564.7 1379.3L2562.7 1376.1L2561.9 1380.2L2557.8 1380.7L2560.6 1373.8L2561.9 1370.1L2554.5 1378.4L2551.3 1377.0L2549.3 1371.1L2546.4 1369.2L2538.3 1365.6L2534.2 1363.4L2526.1 1364.3L2513.9 1367.0L2505.8 1370.1L2503.7 1374.2L2497.2 1374.2L2489.5 1374.7L2481.0 1379.7L2473.2 1378.8L2469.6 1376.5L2469.2 1372.9L2472.0 1371.5L2472.0 1365.6L2469.2 1356.7L2468.8 1353.1L2465.9 1347.8L2463.1 1339.9L2464.3 1334.7L2463.1 1328.3L2463.9 1324.0L2465.1 1321.0L2469.2 1319.7L2475.3 1316.3L2483.8 1314.6L2489.5 1312.5L2495.6 1309.1L2498.4 1304.9L2499.7 1300.8L2503.7 1298.7L2507.8 1294.5L2509.8 1291.2L2515.1 1288.3L2518.0 1287.4L2522.8 1292.0L2528.1 1292.0L2529.3 1286.2L2531.4 1282.9L2533.4 1281.7L2537.5 1277.1L2540.3 1277.9L2544.4 1279.2L2550.5 1280.8L2556.6 1280.0L2557.8 1282.1L2554.5 1285.4L2552.5 1291.6L2556.6 1294.9L2560.6 1297.8L2566.7 1302.0L2572.8 1302.8L2575.7 1298.7L2576.9 1292.4L2577.3 1286.2L2577.3 1282.1L2578.9 1275.9L2581.0 1274.7ZM2589.5 1406.1L2597.2 1408.1L2604.5 1407.1L2604.5 1413.4L2602.5 1418.3L2599.3 1420.3L2595.2 1419.8L2591.9 1413.4L2589.9 1409.0ZM2703.7 1376.5L2707.0 1379.3L2711.0 1383.0L2715.1 1386.2L2716.7 1390.9L2721.2 1392.8L2727.3 1391.8L2725.3 1396.6L2721.2 1399.4L2720.4 1402.8L2717.1 1408.5L2713.9 1410.5L2712.3 1409.0L2713.1 1405.2L2711.0 1401.8L2708.2 1399.4L2711.4 1396.1L2712.3 1392.3L2709.8 1386.2L2704.9 1380.7ZM2703.7 1405.2L2709.8 1410.0L2709.0 1413.9L2706.2 1417.3L2704.1 1421.3L2698.8 1423.8L2696.8 1428.3L2694.8 1432.3L2688.7 1435.4L2682.6 1433.9L2678.5 1431.3L2680.6 1427.3L2685.8 1422.3L2692.8 1418.3L2697.6 1413.9L2700.1 1410.0L2703.7 1405.2ZM1656.2 1140.6L1662.3 1136.3L1666.3 1135.0L1674.5 1135.4L1680.6 1138.4L1686.7 1141.8L1692.8 1143.5L1700.5 1147.8L1694.8 1149.1L1686.7 1149.1L1685.8 1145.7L1682.6 1142.3L1674.5 1140.1L1669.2 1139.3L1666.3 1137.2L1658.2 1141.0ZM1699.3 1155.4L1705.0 1149.1L1717.2 1149.9L1724.1 1154.5L1717.2 1156.2L1711.1 1158.7L1707.0 1156.2L1699.3 1155.4ZM1683.4 1155.4L1691.9 1157.1L1687.9 1158.3ZM1728.5 1155.0L1735.0 1155.8L1728.9 1157.1ZM1684.6 1119.4L1688.7 1120.7L1686.7 1129.4L1683.4 1127.3ZM1760.6 1021.5L1765.9 1014.2L1770.0 1005.7L1776.1 1000.3L1776.1 1008.9L1784.2 1011.6L1786.3 1018.4L1787.9 1022.0L1785.4 1026.1L1782.2 1022.0L1776.1 1025.1L1773.2 1021.5ZM1479.8 1004.7L1489.5 1008.4L1493.6 1008.9L1500.5 1017.3L1494.4 1016.3L1483.4 1008.9ZM1461.1 987.2L1466.3 989.4L1469.2 997.1L1464.3 992.7ZM1372.4 968.9L1383.0 965.4L1377.7 961.3L1373.7 965.4ZM1740.3 1026.6L1749.7 1027.1L1746.4 1030.2ZM1739.5 1010.0L1749.7 1011.6L1745.6 1013.1ZM1752.5 1460.0L1766.7 1461.1L1763.9 1464.9L1755.8 1464.4ZM1367.6 1147.8L1372.4 1150.7L1368.4 1153.3ZM1847.2 1474.8L1855.4 1476.5L1847.2 1477.6ZM2282.2 1446.8L2288.3 1448.9L2284.2 1451.5ZM1310.7 993.8L1322.8 989.9L1328.9 986.1L1318.8 991.1ZM1494.4 853.1L1523.1 854.4L1534.8 862.2L1519.1 869.4L1513.9 877.2L1502.2 878.5L1489.8 873.3L1497.0 864.2ZM1517.8 869.4L1536.1 862.2L1553.1 866.1L1563.5 859.6L1577.2 858.9L1576.6 869.4L1589.6 879.8L1593.5 889.0L1583.1 894.2L1553.1 897.4L1536.1 895.5L1524.4 887.7L1523.1 878.5ZM1524.4 845.9L1530.9 838.1L1540.0 834.2L1555.7 832.8L1571.3 840.7L1573.9 845.9L1563.5 851.1L1547.8 852.4L1537.4 853.7ZM1502.8 838.1L1512.6 830.2L1529.6 826.3L1534.8 830.2L1529.6 840.7L1519.1 844.6L1506.1 842.0ZM1532.2 822.4L1546.5 817.2L1558.3 818.5L1555.7 827.6L1545.2 828.9L1534.8 826.3ZM1572.6 810.7L1584.4 810.7L1597.4 817.2L1600.0 823.7L1588.3 826.3L1577.9 822.4ZM1602.7 815.9L1614.4 817.2L1622.2 825.0L1618.3 828.9L1607.9 826.3L1602.7 821.1ZM1577.2 834.2L1590.9 834.2L1605.3 835.5L1606.6 847.2L1593.5 848.5L1583.1 843.3ZM1609.2 843.3L1619.6 842.0L1622.2 851.1L1611.8 852.4ZM1609.2 831.5L1623.5 834.2L1641.8 832.8L1649.6 838.1L1678.3 839.4L1679.6 851.1L1643.1 852.4L1627.4 848.5L1624.8 838.1ZM1609.2 802.8L1619.6 792.4L1627.4 791.1L1645.7 798.9L1649.6 809.4L1644.4 822.4L1630.1 821.1L1619.6 814.6ZM1628.7 789.1L1649.6 783.3L1669.2 778.0L1701.8 774.8L1734.4 775.4L1754.0 782.0L1734.4 792.4L1714.9 802.8L1700.5 813.3L1694.0 822.4L1683.5 830.2L1669.2 830.2L1649.6 825.0L1647.0 809.4L1647.0 797.6ZM1614.4 856.3L1636.6 856.3L1627.4 865.5L1618.3 868.1L1615.7 864.2ZM1584.4 865.5L1605.3 853.7L1610.5 869.4L1605.3 877.2L1587.0 870.7Z" fill="#e0e0e0" stroke="#bdbdbd" stroke-width="1.8" stroke-linejoin="round"/><path d="M1428.5 888.9L1428.5 950.5L1436.7 951.7L1442.8 957.7L1450.9 953.5L1459.0 961.3L1469.2 974.7L1473.2 976.4M1500.5 1014.2L1614.7 1014.2L1614.7 1012.1L1616.3 1015.8L1637.5 1019.4L1644.0 1017.8L1657.0 1025.1L1659.8 1027.1L1666.3 1033.2L1666.7 1044.7L1663.9 1049.1L1666.3 1051.0L1680.6 1048.1L1680.6 1043.2L1690.7 1038.7L1698.0 1034.7L1711.1 1034.7L1714.3 1032.7L1717.2 1027.1L1720.4 1022.5L1725.3 1023.0L1726.1 1031.2L1728.5 1036.7M1525.7 1094.1L1535.4 1093.2L1550.5 1099.5L1561.9 1099.5L1568.8 1097.3L1576.9 1107.1L1582.2 1109.8L1589.5 1106.2L1597.2 1116.4L1605.4 1123.4M1626.9 1171.7L1626.9 1168.3L1631.8 1165.4L1633.8 1165.0L1633.8 1157.9L1639.1 1157.9L1643.2 1155.0M1639.1 1157.9L1639.1 1165.8L1643.2 1166.7M1643.2 1166.7L1638.7 1172.1L1635.4 1175.0M1638.7 1172.1L1644.8 1176.2M1663.5 1169.6L1654.1 1173.7L1646.8 1178.3M1661.9 1186.5L1653.3 1185.7M1665.9 1192.3L1664.7 1198.0M1711.9 1182.8L1707.0 1186.1L1707.0 1196.4L1717.2 1202.5L1727.3 1205.8L1726.1 1212.7L1728.1 1222.9L1729.8 1226.1L1719.2 1226.9L1718.0 1248.1M1757.8 1196.4L1753.7 1209.8L1755.8 1212.7L1741.5 1214.7L1729.8 1226.1M1769.2 1207.0L1765.9 1222.9M1782.2 1207.8L1780.2 1221.6M1791.9 1213.9L1780.2 1221.6L1765.9 1224.9L1757.8 1224.9L1755.8 1212.7M1718.0 1248.1L1705.0 1261.1L1707.0 1269.7L1714.7 1275.9L1719.2 1275.9L1735.8 1270.5L1737.5 1280.0L1751.7 1286.2L1757.8 1288.3L1757.0 1297.8L1765.1 1297.8L1767.6 1304.9L1765.9 1313.4L1774.9 1323.1L1779.8 1337.3L1783.0 1343.4L1776.1 1347.8L1767.6 1357.6L1774.1 1361.1L1784.2 1373.8M1681.0 1225.3L1688.7 1229.4L1696.0 1231.4L1702.9 1237.1L1717.2 1248.1M1675.3 1244.8L1680.6 1251.3L1688.7 1242.4L1694.8 1235.1L1696.0 1231.4M1715.9 1306.6L1719.2 1302.8L1721.2 1292.4L1722.4 1282.1L1719.2 1275.9M1719.2 1302.8L1723.2 1309.1L1725.3 1319.7L1729.3 1326.1L1723.2 1332.6L1723.2 1347.8L1717.2 1356.7L1717.2 1370.1L1713.1 1383.9L1712.3 1402.8L1710.2 1427.3L1702.9 1450.4L1709.0 1458.4L1719.2 1464.9M1722.8 1467.1L1722.8 1479.9M1729.3 1326.1L1747.6 1322.7L1749.7 1313.4L1765.9 1313.4M1747.6 1322.7L1757.8 1330.4L1767.6 1336.9L1779.8 1337.3M1764.3 1374.2L1765.9 1361.1L1767.6 1357.6M1994.0 1082.3L1994.8 1086.8L1996.8 1093.2L1989.9 1095.9L1986.3 1099.1L1981.4 1103.1L1974.9 1107.1L1966.3 1111.1L1966.3 1115.5M1966.3 1115.5L1948.0 1115.5M1966.3 1115.5L1966.3 1122.9L1952.9 1122.9L1952.9 1133.7L1948.9 1135.9L1948.4 1143.1L1932.6 1143.1M1966.3 1117.2L1982.2 1127.7L2006.6 1144.0L2014.7 1149.5L2018.8 1152.4L2025.3 1151.2L2032.2 1144.8L2050.5 1133.7M1982.2 1127.7L1975.3 1127.7L1979.3 1164.2L1955.4 1167.1L1952.1 1170.8L1955.4 1180.3M1934.6 1164.6L1944.8 1162.9L1952.1 1170.8M1955.4 1180.3L1946.0 1179.5L1933.8 1180.3M1948.0 1190.6L1956.2 1190.2L1958.2 1196.4L1955.0 1202.5M1971.2 1213.1L1968.0 1204.5L1969.2 1196.4L1969.6 1189.4L1969.2 1188.2L1963.9 1180.8L1955.4 1180.3M1979.3 1188.6L1990.3 1191.0L1989.9 1186.1L2001.7 1186.1L2005.8 1185.7L2011.5 1182.4M1969.6 1189.4L1979.3 1188.6L1980.2 1182.8L1984.6 1176.2L1993.6 1170.8L2002.5 1170.0L2007.0 1168.3L2016.3 1167.5L2018.8 1161.7L2018.8 1152.4M1989.1 1210.3L1990.3 1199.2L1990.7 1192.3L1990.3 1191.0M2006.6 1206.2L2003.7 1198.4L2001.7 1186.1M2012.7 1205.0L2012.7 1194.3L2016.3 1183.2L2011.5 1182.4M2016.3 1183.2L2020.0 1175.4L2030.2 1177.9L2042.3 1176.6L2057.0 1175.0M2050.5 1133.7L2058.6 1135.9L2064.7 1135.9L2064.7 1146.5L2066.3 1162.1L2057.0 1175.0M2062.7 1135.9L2099.3 1150.7L2099.3 1148.6L2103.3 1148.6L2103.3 1140.1M2103.7 1098.2L2102.9 1105.3L2103.3 1140.1L2129.3 1140.1L2136.7 1140.1L2151.7 1140.1M2048.4 1091.4L2043.6 1097.3L2040.3 1104.0L2042.3 1126.0L2050.5 1133.7M2036.7 1073.9L2035.4 1081.8L2032.6 1089.6L2040.3 1104.0M2099.3 1150.7L2097.2 1166.7L2091.1 1178.7L2094.4 1184.5L2090.3 1187.8M2057.0 1175.0L2060.6 1182.0L2062.7 1190.2L2058.6 1192.3L2064.7 1200.5L2076.9 1196.4L2090.3 1187.8L2095.2 1195.6L2105.4 1204.5L2113.1 1210.7L2103.3 1210.7L2093.2 1213.9L2076.9 1216.8L2067.6 1222.1M2036.3 1212.3L2039.5 1204.5L2049.7 1202.5L2054.5 1192.3L2060.6 1182.0M2041.5 1221.6L2047.6 1222.1L2055.4 1222.1L2067.6 1222.1M2047.6 1222.1L2055.4 1225.7L2060.2 1239.1L2046.8 1246.9M2067.6 1222.1L2072.8 1235.1L2066.7 1245.2L2055.4 1250.5L2051.3 1251.3M2051.7 1255.4L2054.5 1255.4L2072.8 1263.6L2078.9 1259.5L2090.3 1259.5L2091.1 1275.9L2099.3 1275.9L2107.4 1277.9L2117.6 1281.2L2122.8 1284.1L2117.6 1265.6L2126.1 1264.8M2126.1 1264.8L2120.4 1249.3L2121.6 1237.1L2123.7 1226.9L2128.5 1222.1L2126.9 1216.8L2113.1 1210.7M2097.2 1192.3L2111.5 1191.9L2123.7 1190.2L2133.8 1182.0L2139.9 1192.3M2158.6 1157.1L2150.1 1172.5L2144.8 1182.0L2140.7 1188.2L2139.9 1192.3L2137.9 1198.4L2144.0 1207.8L2139.9 1213.9M2150.1 1172.5L2160.2 1171.2L2170.4 1174.1L2174.1 1179.9L2176.5 1186.1L2182.6 1194.3L2196.4 1198.4L2184.6 1210.7L2172.0 1214.7L2162.3 1216.8L2147.6 1212.3L2139.9 1213.9M2172.0 1214.7L2168.4 1219.6L2168.4 1237.1M2128.5 1216.0L2139.9 1213.9L2144.0 1224.9L2139.9 1235.1L2154.1 1245.2L2161.0 1249.7M2125.7 1235.1L2139.9 1235.1M2165.9 1273.8L2154.1 1277.9L2143.2 1277.9L2144.0 1292.4L2145.2 1300.8L2135.8 1288.3L2135.8 1269.7L2126.5 1264.8M2124.9 1294.9L2135.8 1298.7L2135.0 1309.1L2131.8 1323.1L2128.9 1323.6L2131.8 1334.7L2135.4 1342.6M2104.1 1304.1L2115.5 1298.7L2124.9 1294.9M2104.1 1304.1L2107.4 1311.3L2114.3 1320.6L2121.2 1322.7L2128.9 1323.6M2099.3 1275.9L2099.3 1284.1L2091.1 1284.1L2091.1 1297.8L2096.8 1303.3L2104.1 1304.1M2049.7 1302.0L2056.6 1300.8L2076.9 1302.8L2086.3 1304.9L2096.8 1303.3M2087.1 1306.2L2087.1 1321.9L2083.0 1321.9L2083.0 1333.4L2083.0 1349.6L2068.8 1350.5M2083.0 1333.4L2095.2 1336.0L2105.4 1337.3L2113.5 1327.8L2121.2 1322.7M2111.5 1355.3L2117.6 1350.5L2120.8 1353.6L2120.0 1358.4L2115.5 1359.3L2111.5 1355.3M2140.7 1099.5L2143.6 1107.6M2147.6 1078.6L2150.9 1074.4L2156.2 1074.4L2164.3 1073.4L2173.6 1072.5L2183.8 1072.5M2183.8 1072.5L2182.2 1066.9L2181.8 1062.1L2178.5 1054.9L2174.5 1052.0L2170.8 1051.5M2173.6 1072.5L2169.2 1085.5L2159.4 1090.0L2151.3 1095.0L2146.4 1093.2M2159.4 1090.0L2152.1 1098.6L2156.2 1103.1L2148.0 1108.9L2144.0 1108.0M2159.4 1090.0L2168.4 1096.4L2183.4 1108.9L2190.7 1109.3L2196.8 1108.0M2183.8 1072.5L2186.7 1079.0L2188.7 1087.3L2194.8 1091.9L2198.9 1101.3L2199.3 1105.3M2175.3 1163.8L2180.6 1160.0L2192.8 1161.2L2213.1 1152.9L2228.1 1140.1L2226.1 1135.9L2229.3 1130.7L2231.0 1127.7M2213.9 1166.3L2213.1 1152.9M2211.5 1130.3L2215.1 1136.7L2228.1 1140.1M2252.1 1126.4L2259.0 1117.2L2256.2 1112.9L2249.3 1106.2L2252.9 1099.5L2248.9 1095.0L2248.0 1085.5L2250.5 1079.9L2245.6 1073.4L2233.4 1068.3L2221.2 1072.0M2249.3 1106.2L2270.0 1107.6L2276.1 1098.6L2284.2 1091.9L2290.3 1086.4L2292.3 1078.1L2304.5 1073.4M2250.5 1079.9L2261.9 1076.2L2272.0 1071.6L2278.1 1072.5L2286.2 1071.1L2292.3 1073.4L2306.2 1071.6M2201.7 1026.6L2199.7 1018.4L2193.6 1008.9L2204.9 1000.9L2223.2 1003.6L2237.5 1003.6L2251.7 1003.6L2249.7 989.9L2265.9 984.4L2286.2 981.6L2300.5 987.2L2312.7 987.2L2318.8 995.5L2335.0 1004.7L2341.1 1003.6L2356.6 1013.1M2217.1 1049.6L2229.3 1053.0L2237.5 1047.1L2245.6 1037.2L2253.7 1042.2L2263.9 1041.2L2270.0 1049.6L2280.2 1056.4L2290.3 1048.6L2300.5 1047.6L2306.6 1045.7L2324.9 1045.7L2328.1 1034.7L2337.1 1032.2L2339.1 1023.5L2349.3 1024.6L2356.6 1013.1M2229.3 1053.0L2233.4 1068.3M2245.6 1073.4L2253.7 1064.0L2263.9 1061.6L2272.0 1071.6M2280.2 1056.4L2288.3 1058.3L2298.4 1061.6L2306.6 1059.2M2356.6 1013.1L2367.6 1006.3L2375.7 1005.2L2398.0 1010.0L2400.1 998.2L2416.3 1000.9L2432.6 1007.3L2440.7 1011.6L2457.0 1011.6L2475.3 1010.0L2480.6 1011.6L2488.7 1004.7L2493.6 991.1L2511.9 992.7L2520.0 1010.0L2532.2 1015.2L2540.3 1021.0L2550.5 1017.3L2543.2 1033.7L2534.2 1035.2L2535.0 1045.2L2533.0 1048.1M2358.6 1013.1L2369.6 1027.1L2371.6 1034.7L2394.0 1046.1L2412.3 1046.6L2428.5 1051.0L2444.8 1047.1L2456.2 1041.2L2471.2 1033.2L2488.7 1025.6L2481.4 1021.0L2475.3 1010.0M2507.0 1059.7L2513.9 1054.4L2522.8 1052.5L2530.2 1046.1L2533.0 1048.1M2514.7 1070.2L2520.0 1067.3L2523.6 1065.9M2306.6 1059.2L2301.7 1061.6L2306.2 1071.6L2308.6 1074.4L2318.0 1080.4L2324.9 1087.3L2322.0 1094.1L2323.6 1100.0L2331.0 1104.4M2278.9 1132.4L2290.3 1129.4L2288.3 1120.7L2296.4 1112.0L2304.5 1103.1L2304.9 1094.1L2302.5 1087.3L2318.0 1080.4M2327.7 1110.7L2331.0 1104.4L2341.1 1108.9L2351.3 1114.6L2360.2 1115.1L2359.8 1120.3L2343.2 1116.8L2327.7 1110.7M2362.7 1117.2L2375.7 1115.1L2385.8 1108.9L2396.0 1113.3M2363.5 1141.0L2361.5 1131.6L2359.4 1125.1L2366.7 1122.1L2375.7 1127.3L2377.7 1131.6L2376.5 1143.5M2377.7 1131.6L2383.8 1129.4L2387.9 1120.7L2396.0 1113.3M2396.0 1113.3L2402.1 1127.3L2400.1 1131.6L2406.2 1139.7L2412.3 1142.3L2417.1 1138.4L2428.5 1135.9L2435.4 1136.7L2440.7 1142.3M2408.6 1147.4L2400.1 1155.0L2402.5 1165.4L2404.9 1182.0L2402.5 1190.2M2417.1 1138.4L2424.5 1146.5L2432.6 1157.1L2438.7 1167.5L2439.1 1171.7M2408.6 1147.4L2413.5 1159.2L2424.5 1157.1L2430.6 1167.5L2432.2 1172.5M2420.0 1183.6L2418.4 1175.4L2432.2 1172.5L2439.1 1171.7L2432.6 1186.1L2426.5 1188.6M2412.3 1142.3L2408.6 1147.4M2409.4 1204.5L2416.7 1205.8M2447.2 1223.3L2457.0 1224.9L2467.1 1224.9L2471.6 1213.9L2480.2 1213.9M2574.9 1241.6L2574.9 1268.1M1965.5 1050.1L1968.4 1049.1L1974.9 1050.1L1973.7 1054.4L1973.2 1060.7L1971.2 1061.2L1973.2 1064.5L1971.2 1071.1L1971.6 1072.5M1994.4 1042.7L2001.7 1046.1L2007.8 1047.1L2014.7 1047.6M2011.9 1003.0L2018.8 1008.9L2025.3 1011.6L2027.7 1011.6L2035.0 1014.2L2032.6 1021.5L2026.1 1028.7L2030.2 1030.2L2028.5 1034.7L2032.2 1040.7M2015.5 1001.4L2022.0 1000.9L2025.3 1004.7L2026.5 1008.4L2027.7 1011.6M2025.3 1004.7L2026.1 998.7L2031.0 991.6M2036.7 982.1L2041.9 982.7M2059.8 987.7L2061.0 994.9L2062.7 1003.6L2051.7 1007.3L2057.8 1015.2L2054.5 1022.0L2044.4 1022.0L2040.3 1021.5L2032.6 1021.5M2062.7 1003.6L2068.8 1007.3L2078.1 1011.6L2093.6 1013.7M2057.8 1015.2L2062.7 1014.2L2070.8 1016.3L2078.1 1011.6M2044.4 1022.0L2044.4 1025.1L2051.3 1024.6L2057.4 1027.1L2067.1 1025.6L2068.8 1021.0L2070.8 1016.3M2029.7 1030.2L2036.3 1028.1L2042.8 1027.6L2044.4 1025.1M2057.4 1027.1L2057.0 1031.7M2070.8 1016.3L2078.1 1020.4L2092.3 1017.3L2094.4 1019.9L2089.1 1027.1L2084.2 1029.2L2078.5 1030.2L2072.0 1030.2L2067.1 1025.6M2093.6 1013.7L2092.3 1017.3M2081.4 984.9L2094.4 984.9L2097.2 987.7L2098.9 995.5L2097.6 1000.9L2099.7 1005.2L2093.6 1013.7M2100.5 965.4L2113.1 967.2M2115.5 955.3L2113.1 967.2L2116.3 974.7L2109.8 977.6M2087.5 975.3L2099.3 974.1L2109.8 977.6L2106.2 985.5L2097.2 987.7M2116.3 974.7L2127.7 977.6L2131.8 988.3L2129.7 995.5L2126.1 1002.0M2097.6 1000.9L2107.4 998.7L2126.1 1002.0M2126.1 1002.0L2137.9 996.5L2146.0 1006.8L2157.0 1008.9L2164.3 1011.0L2163.5 1019.9L2157.0 1024.1M2094.4 1019.9L2102.9 1021.0L2109.8 1018.4L2116.3 1018.4L2123.7 1026.6L2116.3 1032.2L2122.4 1033.7M2109.8 1018.4L2116.3 1032.2M2093.6 1038.7L2101.3 1041.2L2111.5 1039.2L2118.0 1041.2M2084.2 1029.2L2088.7 1033.7L2093.6 1038.7M2093.6 1038.7L2092.8 1044.7L2095.2 1052.5L2107.8 1051.0L2115.5 1049.6M2107.8 1051.0L2107.4 1055.4M2083.0 1060.7L2087.1 1055.4L2095.2 1052.5M2063.5 1032.2L2068.8 1033.7L2078.9 1034.7L2081.0 1039.7L2079.7 1044.7L2076.9 1047.1M2078.9 1034.7L2088.7 1033.7M2081.0 1047.1L2085.0 1047.1L2092.8 1048.1M2085.0 1049.6L2087.1 1055.4M2048.0 958.3L2052.5 949.2L2051.3 939.9L2058.6 923.9L2064.7 914.0L2072.8 900.3L2085.0 893.2L2095.2 896.1L2107.4 886.8L2117.6 888.9L2126.9 887.5M2099.7 915.3L2097.2 903.8L2085.0 893.2M2114.7 949.2L2123.7 941.2L2121.6 927.2L2123.7 910.6L2117.6 898.9L2117.6 888.9M2164.3 1042.2L2172.4 1043.7L2180.6 1046.1L2188.7 1050.1L2198.9 1050.5M2178.5 1053.9L2184.6 1053.5L2190.7 1054.4L2186.7 1061.6L2196.8 1066.4L2200.5 1066.9M1972.0 981.0L1968.8 984.4L1976.1 986.6" fill="none" stroke="#c4c4c4" stroke-width="1.6" stroke-linejoin="round"/><path d="M2115.5 1052.0L2119.6 1053.5L2129.7 1053.5L2137.9 1049.6L2144.0 1049.6L2148.0 1051.0L2154.1 1053.9L2163.1 1054.4L2170.8 1051.5L2163.5 1041.7L2159.4 1038.2L2155.4 1036.2L2150.1 1033.2L2145.2 1035.2L2139.9 1037.7L2137.9 1036.7L2133.8 1033.2L2137.9 1030.2L2133.4 1029.2L2130.6 1026.6L2126.5 1027.1L2122.4 1033.7L2118.0 1040.7L2115.1 1043.7L2115.1 1047.1ZM2196.4 1029.7L2201.7 1026.6L2209.0 1024.6L2217.1 1025.6L2218.0 1033.2L2210.2 1037.2L2207.0 1037.2L2211.0 1044.7L2216.3 1049.6L2216.7 1053.5L2221.2 1056.8L2220.8 1068.7L2219.2 1072.0L2213.1 1074.4L2206.2 1072.0L2200.9 1068.7L2200.9 1064.0L2204.5 1057.3L2202.9 1054.4L2198.9 1049.6L2194.8 1044.7L2194.0 1038.2L2191.9 1035.7ZM2131.0 1231.8L2137.9 1229.8L2140.7 1232.6L2139.9 1235.9L2139.1 1240.4L2134.2 1241.6L2130.6 1238.3L2130.6 1235.1ZM1627.7 1026.1L1637.9 1020.4L1650.1 1015.8L1657.0 1024.6L1658.2 1027.1L1644.0 1025.6ZM1644.8 1048.1L1644.8 1037.2L1648.0 1030.7L1656.2 1029.7L1657.0 1030.7L1654.1 1037.2L1650.1 1049.6ZM1658.2 1030.7L1666.3 1028.7L1674.5 1032.2L1670.4 1035.7L1666.3 1044.7L1662.3 1040.7ZM1662.3 1051.0L1672.4 1048.6L1681.0 1045.2L1679.8 1047.1L1668.4 1052.0ZM1677.3 1043.2L1688.7 1039.7L1691.9 1042.2L1684.6 1043.2Z" fill="#fff" stroke="#bdbdbd" stroke-width="1.8" stroke-linejoin="round"/><circle cx="1593" cy="1064.6" r="77.8" fill="rgba(67,160,71,0.55)" stroke="rgba(56,142,60,0.85)" stroke-width="2"/><circle cx="1593.6" cy="1064.9" r="23.7" fill="rgba(229,57,53,0.5)" stroke="rgba(229,57,53,0.8)" stroke-width="2"/><circle cx="1530.5" cy="956.6" r="12" fill="rgba(190,45,40,0.72)" stroke="rgba(229,57,53,0.8)" stroke-width="2"/><circle cx="1532" cy="956.6" r="12" fill="rgba(67,160,71,0.55)" stroke="rgba(56,142,60,0.85)" stroke-width="2"/><circle cx="1586" cy="1131.6" r="11" fill="rgba(67,160,71,0.55)" stroke="rgba(56,142,60,0.85)" stroke-width="2"/><circle cx="2068.2" cy="935.3" r="10.3" fill="rgba(229,57,53,0.5)" stroke="rgba(229,57,53,0.8)" stroke-width="2"/><circle cx="2105.7" cy="937.2" r="10.9" fill="rgba(190,45,40,0.72)" stroke="rgba(229,57,53,0.8)" stroke-width="2"/><circle cx="2105.7" cy="937.2" r="10.9" fill="rgba(67,160,71,0.55)" stroke="rgba(56,142,60,0.85)" stroke-width="2"/><circle cx="2036.3" cy="947.9" r="10.3" fill="rgba(67,160,71,0.55)" stroke="rgba(56,142,60,0.85)" stroke-width="2"/><circle cx="2038.5" cy="973.4" r="10.3" fill="rgba(67,160,71,0.55)" stroke="rgba(56,142,60,0.85)" stroke-width="2"/><circle cx="2093.5" cy="974.7" r="10.3" fill="rgba(229,57,53,0.5)" stroke="rgba(229,57,53,0.8)" stroke-width="2"/><circle cx="1966.9" cy="991" r="11.6" fill="rgba(190,45,40,0.72)" stroke="rgba(229,57,53,0.8)" stroke-width="2"/><circle cx="1966.9" cy="991" r="11.6" fill="rgba(67,160,71,0.55)" stroke="rgba(56,142,60,0.85)" stroke-width="2"/><circle cx="1994.5" cy="995.7" r="11.6" fill="rgba(190,45,40,0.72)" stroke="rgba(229,57,53,0.8)" stroke-width="2"/><circle cx="1994.5" cy="995.7" r="11.6" fill="rgba(67,160,71,0.55)" stroke="rgba(56,142,60,0.85)" stroke-width="2"/><circle cx="2026.9" cy="989.7" r="10.7" fill="rgba(190,45,40,0.72)" stroke="rgba(229,57,53,0.8)" stroke-width="2"/><circle cx="2026.9" cy="989.7" r="10.7" fill="rgba(67,160,71,0.55)" stroke="rgba(56,142,60,0.85)" stroke-width="2"/><circle cx="2045.3" cy="996.3" r="10.7" fill="rgba(67,160,71,0.55)" stroke="rgba(56,142,60,0.85)" stroke-width="2"/><circle cx="2079.4" cy="991.6" r="10.7" fill="rgba(67,160,71,0.55)" stroke="rgba(56,142,60,0.85)" stroke-width="2"/><circle cx="2018.8" cy="1005.3" r="9.8" fill="rgba(229,57,53,0.5)" stroke="rgba(229,57,53,0.8)" stroke-width="2"/><circle cx="2063.8" cy="1010.9" r="10.3" fill="rgba(67,160,71,0.55)" stroke="rgba(56,142,60,0.85)" stroke-width="2"/><circle cx="2015.6" cy="1025.9" r="10.7" fill="rgba(229,57,53,0.5)" stroke="rgba(229,57,53,0.8)" stroke-width="2"/><circle cx="2027.3" cy="1026.9" r="10.7" fill="rgba(190,45,40,0.72)" stroke="rgba(229,57,53,0.8)" stroke-width="2"/><circle cx="2027.3" cy="1026.9" r="10.7" fill="rgba(67,160,71,0.55)" stroke="rgba(56,142,60,0.85)" stroke-width="2"/><circle cx="2054.5" cy="1022.5" r="10.7" fill="rgba(190,45,40,0.72)" stroke="rgba(229,57,53,0.8)" stroke-width="2"/><circle cx="2054.5" cy="1022.5" r="10.7" fill="rgba(67,160,71,0.55)" stroke="rgba(56,142,60,0.85)" stroke-width="2"/><circle cx="2062" cy="1028.7" r="10.3" fill="rgba(67,160,71,0.55)" stroke="rgba(56,142,60,0.85)" stroke-width="2"/><circle cx="2063.8" cy="1040.4" r="10.3" fill="rgba(67,160,71,0.55)" stroke="rgba(56,142,60,0.85)" stroke-width="2"/><circle cx="2049.4" cy="1048.2" r="10.3" fill="rgba(67,160,71,0.55)" stroke="rgba(56,142,60,0.85)" stroke-width="2"/><circle cx="1995.4" cy="1061" r="10.7" fill="rgba(67,160,71,0.55)" stroke="rgba(56,142,60,0.85)" stroke-width="2"/><circle cx="2092" cy="1075" r="9.4" fill="rgba(229,57,53,0.5)" stroke="rgba(229,57,53,0.8)" stroke-width="2"/><circle cx="1970.3" cy="1091.9" r="10.9" fill="rgba(229,57,53,0.5)" stroke="rgba(229,57,53,0.8)" stroke-width="2"/><circle cx="2284.3" cy="1015.5" r="11" fill="rgba(229,57,53,0.5)" stroke="rgba(229,57,53,0.8)" stroke-width="2"/><circle cx="2403" cy="1081.9" r="11" fill="rgba(190,45,40,0.72)" stroke="rgba(229,57,53,0.8)" stroke-width="2"/><circle cx="2403" cy="1081.9" r="11" fill="rgba(67,160,71,0.55)" stroke="rgba(56,142,60,0.85)" stroke-width="2"/><circle cx="2520.7" cy="1076.5" r="11" fill="rgba(67,160,71,0.55)" stroke="rgba(56,142,60,0.85)" stroke-width="2"/><circle cx="2519.2" cy="1076.5" r="11" fill="rgba(229,57,53,0.5)" stroke="rgba(229,57,53,0.8)" stroke-width="2"/><circle cx="2561.5" cy="1077.5" r="11" fill="rgba(67,160,71,0.55)" stroke="rgba(56,142,60,0.85)" stroke-width="2"/><circle cx="2560" cy="1077.5" r="11" fill="rgba(229,57,53,0.5)" stroke="rgba(229,57,53,0.8)" stroke-width="2"/><circle cx="2223.1" cy="1132.5" r="11" fill="rgba(190,45,40,0.72)" stroke="rgba(229,57,53,0.8)" stroke-width="2"/><circle cx="2223.1" cy="1132.5" r="11" fill="rgba(67,160,71,0.55)" stroke="rgba(56,142,60,0.85)" stroke-width="2"/><circle cx="2316.1" cy="1132.8" r="11" fill="rgba(229,57,53,0.5)" stroke="rgba(229,57,53,0.8)" stroke-width="2"/><circle cx="2375.5" cy="1139.4" r="11" fill="rgba(229,57,53,0.5)" stroke="rgba(229,57,53,0.8)" stroke-width="2"/><circle cx="2492.5" cy="1132.8" r="11" fill="rgba(67,160,71,0.55)" stroke="rgba(56,142,60,0.85)" stroke-width="2"/><circle cx="2491" cy="1132.8" r="11" fill="rgba(229,57,53,0.5)" stroke="rgba(229,57,53,0.8)" stroke-width="2"/><circle cx="2493.7" cy="1163.1" r="10.5" fill="rgba(229,57,53,0.5)" stroke="rgba(229,57,53,0.8)" stroke-width="2"/><circle cx="2423.3" cy="1225.5" r="11" fill="rgba(190,45,40,0.72)" stroke="rgba(229,57,53,0.8)" stroke-width="2"/><circle cx="2423.3" cy="1225.5" r="11" fill="rgba(67,160,71,0.55)" stroke="rgba(56,142,60,0.85)" stroke-width="2"/><circle cx="2066" cy="1319.8" r="10.6" fill="rgba(67,160,71,0.55)" stroke="rgba(56,142,60,0.85)" stroke-width="2"/><circle cx="2091" cy="1361.4" r="10.6" fill="rgba(67,160,71,0.55)" stroke="rgba(56,142,60,0.85)" stroke-width="2"/><circle cx="2552.9" cy="1333.5" r="10.6" fill="rgba(190,45,40,0.72)" stroke="rgba(229,57,53,0.8)" stroke-width="2"/><circle cx="2552.9" cy="1333.5" r="10.6" fill="rgba(67,160,71,0.55)" stroke="rgba(56,142,60,0.85)" stroke-width="2"/><circle cx="2689.3" cy="1427.5" r="10.6" fill="rgba(229,57,53,0.5)" stroke="rgba(229,57,53,0.8)" stroke-width="2"/><circle cx="1677.7" cy="1234.8" r="10" fill="rgba(67,160,71,0.55)" stroke="rgba(56,142,60,0.85)" stroke-width="2"/><circle cx="1676.2" cy="1234.8" r="10" fill="rgba(229,57,53,0.5)" stroke="rgba(229,57,53,0.8)" stroke-width="2"/><circle cx="1706.2" cy="1284.2" r="10.6" fill="rgba(229,57,53,0.5)" stroke="rgba(229,57,53,0.8)" stroke-width="2"/><circle cx="1786.1" cy="1265.6" r="10.6" fill="rgba(229,57,53,0.5)" stroke="rgba(229,57,53,0.8)" stroke-width="2"/><circle cx="1739.3" cy="1364.1" r="10" fill="rgba(67,160,71,0.55)" stroke="rgba(56,142,60,0.85)" stroke-width="2"/><circle cx="1708.5" cy="1472.6" r="10.6" fill="rgba(67,160,71,0.55)" stroke="rgba(56,142,60,0.85)" stroke-width="2"/></g></svg>
<div class="t" id="ovs" style="top:676.1px;font-size:33px;line-height:33px;font-weight:700;color:#212121;letter-spacing:-1.062px;left:2845px;">OTHER VOLUME SENT</div>
<div style="position:absolute;left:2845px;top:715px;width:345px;height:2px;background-image:linear-gradient(90deg,#9e9e9e 50%,transparent 50%);background-size:4px 2px;"></div>
<div class="t" id="ovs_v" style="top:676.1px;font-size:33px;line-height:33px;font-weight:400;color:#212121;letter-spacing:-0.800px;right:480.8px;">18,145</div>
<div style="position:absolute;left:2808px;top:734px;width:750px;height:2px;background:#e0e0e0;"></div>
<div style="position:absolute;left:2808px;top:809px;width:750px;height:2px;background:#e0e0e0;"></div>
<div style="position:absolute;left:2808px;top:884.6px;width:750px;height:2px;background:#e0e0e0;"></div>
<div style="position:absolute;left:2808px;top:959px;width:750px;height:2px;background:#e0e0e0;"></div>
<div style="position:absolute;left:2808px;top:1080px;width:750px;height:2px;background:#e0e0e0;"></div>
<div style="position:absolute;left:2808px;top:1155.5px;width:750px;height:2px;background:#e0e0e0;"></div>
<div style="position:absolute;left:2808px;top:1231px;width:750px;height:2px;background:#e0e0e0;"></div>
<div style="position:absolute;left:2808px;top:1306px;width:750px;height:2px;background:#e0e0e0;"></div>
<div style="position:absolute;left:2808px;top:1381px;width:750px;height:2px;background:#e0e0e0;"></div>
<div style="position:absolute;left:2808px;top:1456px;width:750px;height:2px;background:#e0e0e0;"></div>
<div style="position:absolute;left:2808px;top:1531px;width:750px;height:2px;background:#e0e0e0;"></div>
<div class="t" id="o1" style="top:756.6px;font-size:33px;line-height:33px;font-weight:400;color:#212121;letter-spacing:0.374px;left:2845px;">Compliant</div>
<div class="t" id="o1_v" style="top:756.6px;font-size:33px;line-height:33px;font-weight:400;color:#212121;letter-spacing:0.500px;right:479.5px;">4,548</div>
<div class="t" id="o2" style="top:832.1px;font-size:33px;line-height:33px;font-weight:400;color:#212121;letter-spacing:-0.134px;left:2845px;">Fail</div>
<div class="t" id="o2_v" style="top:832.1px;font-size:33px;line-height:33px;font-weight:400;color:#212121;letter-spacing:-0.200px;right:480.2px;">13,597</div>
<div class="t" id="o3" style="top:907.1px;font-size:33px;line-height:33px;font-weight:400;color:#212121;letter-spacing:0.312px;left:2845px;">Probable Forwards</div>
<div class="t" id="o3_v" style="top:907.1px;font-size:33px;line-height:33px;font-weight:400;color:#212121;letter-spacing:0.250px;right:479.8px;">4,475</div>
<div class="t" id="tvs" style="top:1021.1px;font-size:33px;line-height:33px;font-weight:700;color:#212121;letter-spacing:-0.875px;left:2845px;">TOTAL VOLUME SENT</div>
<div style="position:absolute;left:2845px;top:1060px;width:340px;height:2px;background-image:linear-gradient(90deg,#9e9e9e 50%,transparent 50%);background-size:4px 2px;"></div>
<div class="t" id="tvs_v" style="top:1021.1px;font-size:33px;line-height:33px;font-weight:400;color:#212121;letter-spacing:0.101px;right:479.9px;">617,899</div>
<div class="t" id="t1" style="top:1102.6px;font-size:33px;line-height:33px;font-weight:400;color:#212121;letter-spacing:0.400px;left:2845px;">Compliant</div>
<div class="t" id="t1_v" style="top:1102.6px;font-size:33px;line-height:33px;font-weight:400;color:#212121;letter-spacing:0.167px;right:479.8px;">592,146</div>
<div class="t" id="t2" style="top:1177.7px;font-size:33px;line-height:33px;font-weight:400;color:#212121;letter-spacing:0.333px;left:2845px;">Fail</div>
<div class="t" id="t2_v" style="top:1177.7px;font-size:33px;line-height:33px;font-weight:400;color:#212121;letter-spacing:0.640px;right:479.4px;">25,753</div>
<div class="t" id="t3" style="top:1252.9px;font-size:33px;line-height:33px;font-weight:400;color:#212121;letter-spacing:0.640px;left:2845px;">Direct</div>
<div class="t" id="t3_v" style="top:1252.9px;font-size:33px;line-height:33px;font-weight:400;color:#212121;letter-spacing:0.867px;right:479.1px;">599,754</div>
<div class="t" id="t4" style="top:1328.1px;font-size:33px;line-height:33px;font-weight:400;color:#212121;letter-spacing:0.750px;left:2845px;">Other</div>
<div class="t" id="t4_v" style="top:1328.1px;font-size:33px;line-height:33px;font-weight:400;color:#212121;letter-spacing:-1.000px;right:481.0px;">18,145</div>
<div class="t" id="t5" style="top:1403.2px;font-size:33px;line-height:33px;font-weight:400;color:#212121;letter-spacing:0.338px;left:2845px;">Probable Forwards</div>
<div class="t" id="t5_v" style="top:1403.2px;font-size:33px;line-height:33px;font-weight:400;color:#212121;letter-spacing:0.000px;right:480.0px;">24,013</div>
<div class="t" id="t6" style="top:1478.4px;font-size:33px;line-height:33px;font-weight:400;color:#212121;letter-spacing:0.493px;left:2845px;">Suspected Spoofs</div>
<div class="t" id="t6_v" style="top:1478.4px;font-size:33px;line-height:33px;font-weight:400;color:#0b5a88;letter-spacing:1.000px;right:479.0px;text-decoration:underline;text-decoration-thickness:2px;text-underline-offset:5px;">8,285</div>
<div class="t" id="h_ss" style="top:1667.4px;font-size:32px;line-height:32px;font-weight:400;color:#212121;letter-spacing:1.308px;left:483px;">Sending System</div>
<div style="position:absolute;left:483px;top:1705px;width:273px;height:2px;background-image:linear-gradient(90deg,#9e9e9e 50%,transparent 50%);background-size:4px 2px;"></div>
<div class="t" id="h_st" style="top:1667.4px;font-size:32px;line-height:32px;font-weight:400;color:#212121;letter-spacing:1.800px;left:888px;">Status</div>
<div style="position:absolute;left:888px;top:1705px;width:98px;height:2px;background-image:linear-gradient(90deg,#9e9e9e 50%,transparent 50%);background-size:4px 2px;"></div>
<div class="t" id="h_vol" style="top:1667.4px;font-size:32px;line-height:32px;font-weight:400;color:#212121;letter-spacing:0.600px;left:1236px;">Volume</div>
<svg style="position:absolute;left:1356.5px;top:1663.5px" width="39" height="39" viewBox="0 0 24 24"><path fill="#6b6b6b" d="M20 12l-1.41-1.41L13 16.170V4h-2v12.17l-5.58-5.59L4 12l8 8 8-8z"/></svg>
<div class="t" id="h_comp" style="top:1667.4px;font-size:32px;line-height:32px;font-weight:400;color:#212121;letter-spacing:1.000px;left:1479px;">Compliant</div>
<div class="t" id="h_fail" style="top:1667.4px;font-size:32px;line-height:32px;font-weight:400;color:#212121;letter-spacing:1.000px;left:1764px;">Failed</div>
<div class="t" id="h_cmpl" style="top:1667.4px;font-size:32px;line-height:32px;font-weight:400;color:#212121;letter-spacing:0.889px;left:1986px;">Compliance</div>
<div class="t" id="h_daily" style="top:1662.9px;font-size:32px;line-height:32px;font-weight:400;color:#212121;letter-spacing:0.444px;left:2332px;-webkit-text-stroke:0.8px #212121;">Daily by %</div>
<div style="position:absolute;left:2295px;top:1719.5px;width:228px;height:2.2px;background:#e0e0e0;"></div>
<div style="position:absolute;left:446px;top:1735.7px;width:3112px;height:2px;background:#e0e0e0;"></div>
<div class="t" id="hub" style="top:1826.9px;font-size:32px;line-height:32px;font-weight:700;color:#0b5a88;letter-spacing:0.834px;left:483px;">HubSpot</div>
<div class="t" id="r_dir" style="top:1826.9px;font-size:32px;line-height:32px;font-weight:400;color:#212121;letter-spacing:-0.800px;left:888px;">DIRECT</div>
<div style="position:absolute;left:1053px;top:1813px;width:109px;height:58.6px;background:#fb8c00;border-radius:30px;"></div>
<div style="position:absolute;left:1110px;top:1819.3px;width:46px;height:46px;background:#fff;border-radius:50%;box-shadow:0 2px 3px rgba(0,0,0,0.3);"></div>
<div class="t" id="r_vol" style="top:1826.9px;font-size:32px;line-height:32px;font-weight:400;color:#212121;letter-spacing:1.000px;left:1284px;">547,406</div>
<div class="t" id="r_comp" style="top:1826.9px;font-size:32px;line-height:32px;font-weight:400;color:#212121;letter-spacing:1.000px;left:1569px;">543,916</div>
<div class="t" id="r_fail" style="top:1826.9px;font-size:32px;line-height:32px;font-weight:400;color:#212121;letter-spacing:2.000px;left:1825px;">3,490</div>
<div class="t" id="r_pct" style="top:1826.9px;font-size:32px;line-height:32px;font-weight:400;color:#212121;letter-spacing:0.600px;left:2110px;">99.36%</div>
<svg style="position:absolute;left:0;top:0" width="4000" height="1904"><rect x="2306.00" y="1778.5" width="23" height="120.5" fill="#388e3c"/><rect x="2306.00" y="1778.5" width="23" height="27.6" fill="#d32f2f"/><rect x="2350.95" y="1778.5" width="23" height="120.5" fill="#388e3c"/><rect x="2350.95" y="1778.5" width="23" height="12" fill="#d32f2f"/><rect x="2395.90" y="1778.5" width="23" height="120.5" fill="#388e3c"/><rect x="2395.90" y="1778.5" width="23" height="2.6" fill="#d32f2f"/><rect x="2440.85" y="1778.5" width="23" height="120.5" fill="#388e3c"/><rect x="2440.85" y="1778.5" width="23" height="2.6" fill="#d32f2f"/><rect x="2485.80" y="1778.5" width="23" height="120.5" fill="#388e3c"/><rect x="2530.75" y="1778.5" width="23" height="120.5" fill="#388e3c"/><rect x="2575.70" y="1778.5" width="23" height="120.5" fill="#388e3c"/><rect x="2620.65" y="1778.5" width="23" height="120.5" fill="#388e3c"/><rect x="2665.60" y="1778.5" width="23" height="120.5" fill="#388e3c"/><rect x="2710.55" y="1778.5" width="23" height="120.5" fill="#388e3c"/><rect x="2755.50" y="1778.5" width="23" height="120.5" fill="#388e3c"/><rect x="2800.45" y="1778.5" width="23" height="120.5" fill="#388e3c"/><rect x="2845.40" y="1778.5" width="23" height="120.5" fill="#388e3c"/><rect x="2890.35" y="1778.5" width="23" height="120.5" fill="#388e3c"/><rect x="2935.30" y="1778.5" width="23" height="120.5" fill="#388e3c"/><rect x="2980.25" y="1778.5" width="23" height="120.5" fill="#388e3c"/><rect x="3025.20" y="1778.5" width="23" height="120.5" fill="#388e3c"/><rect x="3070.15" y="1778.5" width="23" height="120.5" fill="#388e3c"/><rect x="3115.10" y="1778.5" width="23" height="120.5" fill="#388e3c"/><rect x="3160.05" y="1778.5" width="23" height="120.5" fill="#388e3c"/><rect x="3205.00" y="1778.5" width="23" height="120.5" fill="#388e3c"/><rect x="3205.00" y="1778.5" width="23" height="9.4" fill="#d32f2f"/><rect x="3249.95" y="1778.5" width="23" height="120.5" fill="#388e3c"/><rect x="3294.90" y="1778.5" width="23" height="120.5" fill="#388e3c"/><rect x="3339.85" y="1778.5" width="23" height="120.5" fill="#388e3c"/><rect x="3384.80" y="1778.5" width="23" height="120.5" fill="#388e3c"/><rect x="3429.75" y="1778.5" width="23" height="120.5" fill="#388e3c"/><rect x="3474.70" y="1778.5" width="23" height="120.5" fill="#388e3c"/><rect x="3474.70" y="1778.5" width="23" height="2.6" fill="#d32f2f"/><rect x="3519.65" y="1778.5" width="23" height="120.5" fill="#388e3c"/><rect x="3519.65" y="1778.5" width="23" height="2.6" fill="#d32f2f"/><rect x="2295" y="1899" width="1262" height="2" fill="#c9d3e6"/></svg>
</body></html>
